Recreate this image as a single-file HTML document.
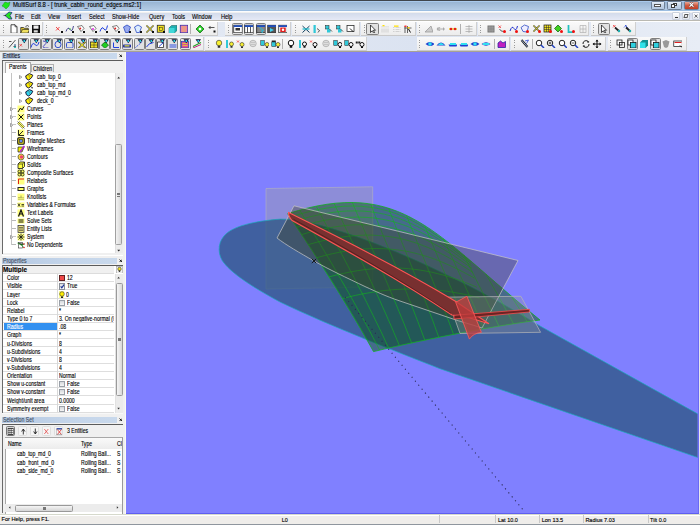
<!DOCTYPE html><html><head><meta charset="utf-8"><style>
*{margin:0;padding:0;box-sizing:border-box}
html,body{width:700px;height:525px;overflow:hidden;background:#f0f0f0;font-family:"Liberation Sans",sans-serif;color:#000}
.a{position:absolute}
.t{position:absolute;white-space:nowrap;font-size:5.6px;line-height:6px;color:#111;-webkit-text-stroke:0.12px currentColor}
</style></head><body>
<div class="a" style="left:0px;top:0px;width:700px;height:1px;background:#40454c"></div>
<div class="a" style="left:0px;top:1px;width:700px;height:9.5px;background:linear-gradient(#a9c9ec 0,#a9c9ec 10%,#9bb6d4 15%,#b7cee7 100%)"></div>
<div class="a" style="left:0px;top:10px;width:700px;height:0.8px;background:#9cbde0"></div>
<svg class="a" style="left:1px;top:1px" width="10" height="9" viewBox="0 0 10 9"><path d="M1 5 L4 1 L7 2 L9 1 L8 5 L5 8 L3 6 Z" fill="#1ee61e" stroke="#0a8a0a" stroke-width="0.4"/></svg>
<div class="t" style="left:13.3px;top:2.2px;transform:scaleX(0.9);transform-origin:0 0;font-size:6.5px;color:#000">MultiSurf 8.8 - [ trunk_cabin_round_edges.ms2:1]</div>
<div class="a" style="left:650.5px;top:1px;width:14.5px;height:8.5px;border:0.6px solid #6d7f95;border-radius:1.5px;background:linear-gradient(#e6eef8,#c3d4e8 50%,#b4c8e0)"></div>
<div class="a" style="left:654.4px;top:3.9px;width:7px;height:3px;background:#fff;border:0.45px solid #555"></div>
<div class="a" style="left:667.3px;top:1px;width:14.5px;height:8.5px;border:0.6px solid #6d7f95;border-radius:1.5px;background:linear-gradient(#e6eef8,#c3d4e8 50%,#b4c8e0)"></div>
<div class="a" style="left:673px;top:2.7px;width:4.2px;height:3.4px;border:0.55px solid #3a3a3a;border-top-width:1px;background:#fff"></div><div class="a" style="left:671.3px;top:4.3px;width:4.2px;height:3.4px;border:0.55px solid #3a3a3a;border-top-width:1px;background:#fff"></div>
<div class="a" style="left:683.5px;top:1px;width:15.5px;height:8.5px;border:0.6px solid #6d7f95;border-radius:1.5px;background:linear-gradient(#eaa898,#d05a40 50%,#c04028)"></div>
<svg class="a" style="left:688px;top:2.2px" width="7" height="5.5" viewBox="0 0 14 11"><path d="M3 1.5 L11 9.5 M11 1.5 L3 9.5" stroke="#4a2020" stroke-width="3.6"/><path d="M3 1.5 L11 9.5 M11 1.5 L3 9.5" stroke="#fff" stroke-width="2.2"/></svg>
<div class="a" style="left:0px;top:10.8px;width:700px;height:1.7px;background:#fbfcfe"></div>
<div class="a" style="left:0px;top:12.5px;width:700px;height:7.5px;background:linear-gradient(#d3dbeb,#e5e9f6)"></div>
<div class="a" style="left:0px;top:20px;width:700px;height:1px;background:#bab9b2"></div>
<svg class="a" style="left:3px;top:11px" width="10" height="9" viewBox="0 0 10 9"><path d="M2 4.5 L6 1 L9 1.5 L7 4.5 L9 8 L6 8 Z" fill="#22e022" stroke="#1a1a8a" stroke-width="0.7"/><path d="M0.5 4.5 L3 4.5" stroke="#111" stroke-width="0.6"/></svg>
<div class="t" style="left:15px;top:13.5px;transform:scaleX(0.82);transform-origin:0 0;font-size:6.8px;color:#000">File</div>
<div class="t" style="left:31.4px;top:13.5px;transform:scaleX(0.82);transform-origin:0 0;font-size:6.8px;color:#000">Edit</div>
<div class="t" style="left:47.7px;top:13.5px;transform:scaleX(0.82);transform-origin:0 0;font-size:6.8px;color:#000">View</div>
<div class="t" style="left:67.4px;top:13.5px;transform:scaleX(0.82);transform-origin:0 0;font-size:6.8px;color:#000">Insert</div>
<div class="t" style="left:88.8px;top:13.5px;transform:scaleX(0.82);transform-origin:0 0;font-size:6.8px;color:#000">Select</div>
<div class="t" style="left:111.5px;top:13.5px;transform:scaleX(0.82);transform-origin:0 0;font-size:6.8px;color:#000">Show-Hide</div>
<div class="t" style="left:148.5px;top:13.5px;transform:scaleX(0.82);transform-origin:0 0;font-size:6.8px;color:#000">Query</div>
<div class="t" style="left:171.5px;top:13.5px;transform:scaleX(0.82);transform-origin:0 0;font-size:6.8px;color:#000">Tools</div>
<div class="t" style="left:192px;top:13.5px;transform:scaleX(0.82);transform-origin:0 0;font-size:6.8px;color:#000">Window</div>
<div class="t" style="left:221px;top:13.5px;transform:scaleX(0.82);transform-origin:0 0;font-size:6.8px;color:#000">Help</div>
<div class="a" style="left:672px;top:12px;width:8px;height:8px;background:linear-gradient(#fff,#e4e8f0);border:0.5px solid #c9d0dc;border-radius:1px"></div>
<div class="a" style="left:682px;top:12px;width:8px;height:8px;background:linear-gradient(#fff,#e4e8f0);border:0.5px solid #c9d0dc;border-radius:1px"></div>
<div class="a" style="left:692px;top:12px;width:8px;height:8px;background:linear-gradient(#fff,#e4e8f0);border:0.5px solid #c9d0dc;border-radius:1px"></div>
<div class="a" style="left:675px;top:17px;width:3px;height:0.9px;background:#333"></div>
<div class="a" style="left:684px;top:13.5px;width:4px;height:4px;border:0.6px solid #555;transform:skewX(-15deg)"></div>
<svg class="a" style="left:693.8px;top:14.2px" width="4.2" height="4.2" viewBox="0 0 10 10"><path d="M1.5 1.5 L8.5 8.5 M8.5 1.5 L1.5 8.5" fill="none" stroke="#333" stroke-width="1.8"/></svg>
<div class="a" style="left:0px;top:21px;width:700px;height:30.5px;background:linear-gradient(90deg,#e9edf5,#dbe3f1 60%,#e8edf6)"></div>
<div class="a" style="left:0px;top:21px;width:700px;height:1px;background:#fff"></div>
<div class="a" style="left:0px;top:22px;width:42.5px;height:14px;background:linear-gradient(#fafafa,#ececec);border-right:0.8px solid #d0d0d0;border-bottom:0.8px solid #c9c9c9"></div>
<div class="a" style="left:2.8px;top:25.0px;width:0.9px;height:0.9px;background:#9a9a9a"></div>
<div class="a" style="left:2.8px;top:27.4px;width:0.9px;height:0.9px;background:#9a9a9a"></div>
<div class="a" style="left:2.8px;top:29.8px;width:0.9px;height:0.9px;background:#9a9a9a"></div>
<div class="a" style="left:2.8px;top:32.2px;width:0.9px;height:0.9px;background:#9a9a9a"></div>
<div class="a" style="left:43.5px;top:22px;width:174.5px;height:14px;background:linear-gradient(#fafafa,#ececec);border-right:0.8px solid #d0d0d0;border-bottom:0.8px solid #c9c9c9"></div>
<div class="a" style="left:46.3px;top:25.0px;width:0.9px;height:0.9px;background:#9a9a9a"></div>
<div class="a" style="left:46.3px;top:27.4px;width:0.9px;height:0.9px;background:#9a9a9a"></div>
<div class="a" style="left:46.3px;top:29.8px;width:0.9px;height:0.9px;background:#9a9a9a"></div>
<div class="a" style="left:46.3px;top:32.2px;width:0.9px;height:0.9px;background:#9a9a9a"></div>
<div class="a" style="left:225px;top:22px;width:66px;height:14px;background:linear-gradient(#fafafa,#ececec);border-right:0.8px solid #d0d0d0;border-bottom:0.8px solid #c9c9c9"></div>
<div class="a" style="left:227.8px;top:25.0px;width:0.9px;height:0.9px;background:#9a9a9a"></div>
<div class="a" style="left:227.8px;top:27.4px;width:0.9px;height:0.9px;background:#9a9a9a"></div>
<div class="a" style="left:227.8px;top:29.8px;width:0.9px;height:0.9px;background:#9a9a9a"></div>
<div class="a" style="left:227.8px;top:32.2px;width:0.9px;height:0.9px;background:#9a9a9a"></div>
<div class="a" style="left:292px;top:22px;width:68px;height:14px;background:linear-gradient(#fafafa,#ececec);border-right:0.8px solid #d0d0d0;border-bottom:0.8px solid #c9c9c9"></div>
<div class="a" style="left:294.8px;top:25.0px;width:0.9px;height:0.9px;background:#9a9a9a"></div>
<div class="a" style="left:294.8px;top:27.4px;width:0.9px;height:0.9px;background:#9a9a9a"></div>
<div class="a" style="left:294.8px;top:29.8px;width:0.9px;height:0.9px;background:#9a9a9a"></div>
<div class="a" style="left:294.8px;top:32.2px;width:0.9px;height:0.9px;background:#9a9a9a"></div>
<div class="a" style="left:361px;top:22px;width:54.60000000000002px;height:14px;background:linear-gradient(#fafafa,#ececec);border-right:0.8px solid #d0d0d0;border-bottom:0.8px solid #c9c9c9"></div>
<div class="a" style="left:363.8px;top:25.0px;width:0.9px;height:0.9px;background:#9a9a9a"></div>
<div class="a" style="left:363.8px;top:27.4px;width:0.9px;height:0.9px;background:#9a9a9a"></div>
<div class="a" style="left:363.8px;top:29.8px;width:0.9px;height:0.9px;background:#9a9a9a"></div>
<div class="a" style="left:363.8px;top:32.2px;width:0.9px;height:0.9px;background:#9a9a9a"></div>
<div class="a" style="left:416.5px;top:22px;width:60.19999999999999px;height:14px;background:linear-gradient(#fafafa,#ececec);border-right:0.8px solid #d0d0d0;border-bottom:0.8px solid #c9c9c9"></div>
<div class="a" style="left:419.3px;top:25.0px;width:0.9px;height:0.9px;background:#9a9a9a"></div>
<div class="a" style="left:419.3px;top:27.4px;width:0.9px;height:0.9px;background:#9a9a9a"></div>
<div class="a" style="left:419.3px;top:29.8px;width:0.9px;height:0.9px;background:#9a9a9a"></div>
<div class="a" style="left:419.3px;top:32.2px;width:0.9px;height:0.9px;background:#9a9a9a"></div>
<div class="a" style="left:477.5px;top:22px;width:111.79999999999995px;height:14px;background:linear-gradient(#fafafa,#ececec);border-right:0.8px solid #d0d0d0;border-bottom:0.8px solid #c9c9c9"></div>
<div class="a" style="left:480.3px;top:25.0px;width:0.9px;height:0.9px;background:#9a9a9a"></div>
<div class="a" style="left:480.3px;top:27.4px;width:0.9px;height:0.9px;background:#9a9a9a"></div>
<div class="a" style="left:480.3px;top:29.8px;width:0.9px;height:0.9px;background:#9a9a9a"></div>
<div class="a" style="left:480.3px;top:32.2px;width:0.9px;height:0.9px;background:#9a9a9a"></div>
<div class="a" style="left:590.5px;top:22px;width:45.200000000000045px;height:14px;background:linear-gradient(#fafafa,#ececec);border-right:0.8px solid #d0d0d0;border-bottom:0.8px solid #c9c9c9"></div>
<div class="a" style="left:593.3px;top:25.0px;width:0.9px;height:0.9px;background:#9a9a9a"></div>
<div class="a" style="left:593.3px;top:27.4px;width:0.9px;height:0.9px;background:#9a9a9a"></div>
<div class="a" style="left:593.3px;top:29.8px;width:0.9px;height:0.9px;background:#9a9a9a"></div>
<div class="a" style="left:593.3px;top:32.2px;width:0.9px;height:0.9px;background:#9a9a9a"></div>
<div class="a" style="left:0px;top:37px;width:204px;height:13.5px;background:linear-gradient(#fafafa,#ececec);border-right:0.8px solid #d0d0d0;border-bottom:0.8px solid #c9c9c9"></div>
<div class="a" style="left:2.8px;top:40.0px;width:0.9px;height:0.9px;background:#9a9a9a"></div>
<div class="a" style="left:2.8px;top:42.4px;width:0.9px;height:0.9px;background:#9a9a9a"></div>
<div class="a" style="left:2.8px;top:44.8px;width:0.9px;height:0.9px;background:#9a9a9a"></div>
<div class="a" style="left:2.8px;top:47.2px;width:0.9px;height:0.9px;background:#9a9a9a"></div>
<div class="a" style="left:205px;top:37px;width:161.7px;height:13.5px;background:linear-gradient(#fafafa,#ececec);border-right:0.8px solid #d0d0d0;border-bottom:0.8px solid #c9c9c9"></div>
<div class="a" style="left:207.8px;top:40.0px;width:0.9px;height:0.9px;background:#9a9a9a"></div>
<div class="a" style="left:207.8px;top:42.4px;width:0.9px;height:0.9px;background:#9a9a9a"></div>
<div class="a" style="left:207.8px;top:44.8px;width:0.9px;height:0.9px;background:#9a9a9a"></div>
<div class="a" style="left:207.8px;top:47.2px;width:0.9px;height:0.9px;background:#9a9a9a"></div>
<div class="a" style="left:416.5px;top:37px;width:93.5px;height:13.5px;background:linear-gradient(#fafafa,#ececec);border-right:0.8px solid #d0d0d0;border-bottom:0.8px solid #c9c9c9"></div>
<div class="a" style="left:419.3px;top:40.0px;width:0.9px;height:0.9px;background:#9a9a9a"></div>
<div class="a" style="left:419.3px;top:42.4px;width:0.9px;height:0.9px;background:#9a9a9a"></div>
<div class="a" style="left:419.3px;top:44.8px;width:0.9px;height:0.9px;background:#9a9a9a"></div>
<div class="a" style="left:419.3px;top:47.2px;width:0.9px;height:0.9px;background:#9a9a9a"></div>
<div class="a" style="left:511px;top:37px;width:95.39999999999998px;height:13.5px;background:linear-gradient(#fafafa,#ececec);border-right:0.8px solid #d0d0d0;border-bottom:0.8px solid #c9c9c9"></div>
<div class="a" style="left:513.8px;top:40.0px;width:0.9px;height:0.9px;background:#9a9a9a"></div>
<div class="a" style="left:513.8px;top:42.4px;width:0.9px;height:0.9px;background:#9a9a9a"></div>
<div class="a" style="left:513.8px;top:44.8px;width:0.9px;height:0.9px;background:#9a9a9a"></div>
<div class="a" style="left:513.8px;top:47.2px;width:0.9px;height:0.9px;background:#9a9a9a"></div>
<div class="a" style="left:607.5px;top:37px;width:79.5px;height:13.5px;background:linear-gradient(#fafafa,#ececec);border-right:0.8px solid #d0d0d0;border-bottom:0.8px solid #c9c9c9"></div>
<div class="a" style="left:610.3px;top:40.0px;width:0.9px;height:0.9px;background:#9a9a9a"></div>
<div class="a" style="left:610.3px;top:42.4px;width:0.9px;height:0.9px;background:#9a9a9a"></div>
<div class="a" style="left:610.3px;top:44.8px;width:0.9px;height:0.9px;background:#9a9a9a"></div>
<div class="a" style="left:610.3px;top:47.2px;width:0.9px;height:0.9px;background:#9a9a9a"></div>
<div class="a" style="left:0px;top:50.5px;width:700px;height:1px;background:#a8a394"></div>
<div class="a" style="left:190.4px;top:24px;width:0.8px;height:10px;background:#b0b0b0"></div>
<div class="a" style="left:459.6px;top:24px;width:0.8px;height:10px;background:#b0b0b0"></div>
<div class="a" style="left:282.4px;top:39px;width:0.8px;height:9.5px;background:#b0b0b0"></div>
<div class="a" style="left:493.9px;top:39px;width:0.8px;height:9.5px;background:#b0b0b0"></div>
<div class="a" style="left:531.6px;top:39px;width:0.8px;height:9.5px;background:#b0b0b0"></div>
<svg class="a" style="left:9.3px;top:24.2px" width="9" height="9" viewBox="0 0 36 36"><path d="M8 3 H24 L32 11 V37 H8 Z" fill="#fff" stroke="#111" stroke-width="3"/><path d="M24 3 V11 H32" fill="none" stroke="#111" stroke-width="2.5"/></svg>
<svg class="a" style="left:19.8px;top:24.2px" width="9" height="9" viewBox="0 0 36 36"><path d="M3 14 H14 L17 17 H33 V36 H3 Z" fill="#d8c030" stroke="#222" stroke-width="3"/><path d="M3 36 L10 22 H38 L32 36Z" fill="#f0e060" stroke="#222" stroke-width="2.5"/><path d="M22 10 Q30 2 36 10" stroke="#222" stroke-width="3" fill="none"/></svg>
<svg class="a" style="left:30.8px;top:24.2px" width="9" height="9" viewBox="0 0 36 36"><rect x="4" y="4" width="32" height="32" fill="#111"/><rect x="10" y="6" width="20" height="13" fill="#eee"/><rect x="11" y="25" width="16" height="9" fill="#ddd"/></svg>
<svg class="a" style="left:53.8px;top:24.2px" width="9" height="9" viewBox="0 0 36 36"><path d="M8 12 L22 26 M22 12 L8 26" stroke="#f03030" stroke-width="3.5"/><rect x="28" y="28" width="8" height="8" fill="#111"/></svg>
<svg class="a" style="left:65.3px;top:24.2px" width="9" height="9" viewBox="0 0 36 36"><path d="M4 30 Q12 8 20 22 T34 8" stroke="#303080" stroke-width="3.5" fill="none"/><circle cx="20" cy="20" r="3" fill="#20c020"/><rect x="28" y="28" width="8" height="8" fill="#111"/></svg>
<svg class="a" style="left:76.3px;top:24.2px" width="9" height="9" viewBox="0 0 36 36"><path d="M6 10 L24 6 L32 18 L20 30 Z" fill="#fff" stroke="#555" stroke-width="3"/><circle cx="17" cy="18" r="4" fill="#e02020"/><rect x="28" y="28" width="8" height="8" fill="#111"/></svg>
<svg class="a" style="left:87.5px;top:24.2px" width="9" height="9" viewBox="0 0 36 36"><path d="M6 10 L24 6 L32 18 L20 30 Z" fill="#fff" stroke="#555" stroke-width="3"/><circle cx="20" cy="20" r="4" fill="#e020e0"/><rect x="28" y="28" width="8" height="8" fill="#111"/></svg>
<svg class="a" style="left:99.1px;top:24.2px" width="9" height="9" viewBox="0 0 36 36"><path d="M4 30 Q12 6 20 20 T34 6" stroke="#2040e0" stroke-width="4" fill="none"/><rect x="28" y="28" width="8" height="8" fill="#111"/></svg>
<svg class="a" style="left:110.5px;top:24.2px" width="9" height="9" viewBox="0 0 36 36"><path d="M6 10 L24 6 L32 18 L20 30 Z" fill="#fff" stroke="#555" stroke-width="3"/><circle cx="17" cy="18" r="4" fill="#e02020"/><rect x="28" y="28" width="8" height="8" fill="#111"/></svg>
<svg class="a" style="left:121.8px;top:24.2px" width="9" height="9" viewBox="0 0 36 36"><path d="M6 12 L20 4 L34 12 L26 34 L14 34Z" fill="#9ae" stroke="#2040c0" stroke-width="3"/><rect x="28" y="28" width="8" height="8" fill="#111"/></svg>
<svg class="a" style="left:133.10000000000002px;top:24.2px" width="9" height="9" viewBox="0 0 36 36"><path d="M6 12 L20 4 L34 12 L26 34 L14 34Z" fill="#def" stroke="#2040c0" stroke-width="3"/><rect x="28" y="28" width="8" height="8" fill="#111"/></svg>
<svg class="a" style="left:144.9px;top:24.2px" width="9" height="9" viewBox="0 0 36 36"><path d="M6 6 L34 34 M34 6 L6 34" stroke="#222" stroke-width="5"/><path d="M6 6 L34 34 M34 6 L6 34" stroke="#e8e020" stroke-width="3"/><rect x="28" y="28" width="8" height="8" fill="#111"/></svg>
<svg class="a" style="left:156.3px;top:24.2px" width="9" height="9" viewBox="0 0 36 36"><rect x="5" y="5" width="28" height="28" fill="#f0e020" stroke="#222" stroke-width="3"/><rect x="13" y="13" width="12" height="12" fill="none" stroke="#222" stroke-width="2"/><rect x="28" y="28" width="8" height="8" fill="#111"/></svg>
<svg class="a" style="left:168.10000000000002px;top:24.2px" width="9" height="9" viewBox="0 0 36 36"><path d="M4 16 L14 6 H36 V26 L26 36 H4Z" fill="#20b0b0" stroke="#105050" stroke-width="2"/><rect x="4" y="16" width="22" height="20" fill="#40d8d8"/></svg>
<svg class="a" style="left:179.3px;top:24.2px" width="9" height="9" viewBox="0 0 36 36"><rect x="5" y="5" width="30" height="30" fill="#f070c0" stroke="#3030a0" stroke-width="3"/><path d="M10 12 H30 M10 20 H30 M10 28 H30" stroke="#e0e020" stroke-width="3"/></svg>
<svg class="a" style="left:194.8px;top:24.2px" width="9" height="9" viewBox="0 0 36 36"><path d="M20 4 L36 20 L20 36 L4 20Z" fill="#20d020" stroke="#106010" stroke-width="3"/><rect x="15" y="15" width="10" height="10" fill="#fff"/></svg>
<svg class="a" style="left:206.5px;top:24.2px" width="9" height="9" viewBox="0 0 36 36"><path d="M8 14 L14 8 M8 14 L14 20 M8 14 H30" stroke="#222" stroke-width="3" fill="none"/><rect x="26" y="26" width="8" height="8" fill="#111"/></svg>
<div class="a" style="left:232.39999999999998px;top:23.2px;width:10.800000000000011px;height:12.000000000000004px;border:0.9px solid #808080;border-radius:1.6px;background:#e2e2e2"></div>
<svg class="a" style="left:233.0px;top:24.2px" width="9" height="9" viewBox="0 0 36 36"><rect x="3" y="5" width="34" height="30" fill="#fff" stroke="#222" stroke-width="3"/><rect x="3" y="5" width="34" height="7" fill="#2050c0"/><rect x="10" y="16" width="18" height="10" fill="#333"/></svg>
<div class="a" style="left:243.6px;top:23.2px;width:10.800000000000011px;height:12.000000000000004px;border:0.9px solid #808080;border-radius:1.6px;background:#e2e2e2"></div>
<svg class="a" style="left:244.20000000000002px;top:24.2px" width="9" height="9" viewBox="0 0 36 36"><rect x="3" y="5" width="34" height="30" fill="#fff" stroke="#222" stroke-width="3"/><rect x="3" y="5" width="34" height="7" fill="#2050c0"/><path d="M14 12 V35 M26 12 V35" stroke="#222" stroke-width="3"/></svg>
<div class="a" style="left:255.6px;top:23.2px;width:10.799999999999983px;height:12.000000000000004px;border:0.9px solid #808080;border-radius:1.6px;background:#e2e2e2"></div>
<svg class="a" style="left:256.2px;top:24.2px" width="9" height="9" viewBox="0 0 36 36"><rect x="3" y="5" width="34" height="30" fill="#888" stroke="#222" stroke-width="3"/><rect x="3" y="5" width="34" height="7" fill="#2050c0"/><path d="M14 14 L30 26 L22 28 L26 36" stroke="#20c0e0" stroke-width="4" fill="none"/></svg>
<svg class="a" style="left:267.3px;top:24.2px" width="9" height="9" viewBox="0 0 36 36"><rect x="3" y="5" width="34" height="30" fill="#555" stroke="#222" stroke-width="3"/><rect x="3" y="5" width="34" height="7" fill="#2050c0"/><path d="M12 16 L28 24 L12 32Z" fill="#40d0f0"/></svg>
<svg class="a" style="left:278.3px;top:24.2px" width="9" height="9" viewBox="0 0 36 36"><rect x="3" y="5" width="34" height="30" fill="#fff" stroke="#222" stroke-width="3"/><rect x="3" y="5" width="34" height="7" fill="#2050c0"/><rect x="9" y="14" width="22" height="18" fill="#e02020"/><circle cx="20" cy="23" r="5" fill="#fff"/></svg>
<svg class="a" style="left:300.5px;top:24.2px" width="9" height="9" viewBox="0 0 36 36"><path d="M6 8 L34 34 M34 8 L6 34" stroke="#104060" stroke-width="4"/><path d="M6 20 H34" stroke="#20c0d0" stroke-width="5"/></svg>
<svg class="a" style="left:311.8px;top:24.2px" width="9" height="9" viewBox="0 0 36 36"><rect x="6" y="4" width="9" height="32" fill="#30c8d8"/><path d="M20 18 L30 26 L24 34" stroke="#222" stroke-width="3" fill="none"/></svg>
<svg class="a" style="left:323.6px;top:24.2px" width="9" height="9" viewBox="0 0 36 36"><rect x="6" y="6" width="14" height="14" fill="#30c8d8" stroke="#222" stroke-width="2"/><rect x="12" y="20" width="14" height="14" fill="#30c8d8"/><path d="M24 22 L32 30" stroke="#222" stroke-width="3"/></svg>
<svg class="a" style="left:334.8px;top:24.2px" width="9" height="9" viewBox="0 0 36 36"><rect x="6" y="6" width="14" height="14" fill="#30c8d8" stroke="#222" stroke-width="2"/><rect x="12" y="20" width="14" height="14" fill="#30c8d8"/><path d="M24 22 L32 30" stroke="#222" stroke-width="3"/></svg>
<svg class="a" style="left:346.3px;top:24.2px" width="9" height="9" viewBox="0 0 36 36"><rect x="4" y="6" width="28" height="24" fill="#fff" stroke="#222" stroke-width="3"/><path d="M16 18 L30 32" stroke="#222" stroke-width="4"/></svg>
<div class="a" style="left:366.4px;top:23.2px;width:12.300000000000011px;height:12.000000000000004px;border:0.9px solid #808080;border-radius:1.6px;background:#e2e2e2"></div>
<svg class="a" style="left:367.5px;top:24.2px" width="9" height="9" viewBox="0 0 36 36"><path d="M10 4 V34 L17 27 L23 37 L27 35 L21 25 H30Z" fill="#fff" stroke="#111" stroke-width="3"/></svg>
<svg class="a" style="left:380.3px;top:24.2px" width="9" height="9" viewBox="0 0 36 36"><path d="M8 10 V36 M16 10 V36 M24 10 V36 M32 10 V36" stroke="#777" stroke-width="2" stroke-dasharray="2 3"/><rect x="10" y="4" width="8" height="5" fill="#ffe000"/></svg>
<svg class="a" style="left:391.8px;top:24.2px" width="9" height="9" viewBox="0 0 36 36"><path d="M6 14 H34 M6 22 H34 M6 30 H34" stroke="#777" stroke-width="2" stroke-dasharray="2 3"/><rect x="8" y="6" width="18" height="5" fill="#ffe000"/></svg>
<svg class="a" style="left:402.90000000000003px;top:24.2px" width="9" height="9" viewBox="0 0 36 36"><path d="M8 8 V36 M18 8 V36 M6 16 H34" stroke="#333" stroke-width="3"/><rect x="6" y="6" width="8" height="6" fill="#ff3030"/><rect x="18" y="12" width="8" height="6" fill="#ffd000"/><path d="M22 20 L30 34" stroke="#111" stroke-width="4"/></svg>
<svg class="a" style="left:424.1px;top:24.2px" width="9" height="9" viewBox="0 0 36 36"><path d="M4 32 L28 8 L36 32Z" fill="#ccc" stroke="#999" stroke-width="3"/></svg>
<svg class="a" style="left:436.1px;top:24.2px" width="9" height="9" viewBox="0 0 36 36"><path d="M4 20 H36" stroke="#999" stroke-width="3"/><path d="M10 12 L4 20 L10 28 M16 12 L10 20 L16 28" stroke="#999" stroke-width="3" fill="none"/><path d="M30 14 V26" stroke="#999" stroke-width="3"/></svg>
<svg class="a" style="left:447.5px;top:24.2px" width="9" height="9" viewBox="0 0 36 36"><path d="M4 20 H36" stroke="#e8c000" stroke-width="5"/><circle cx="12" cy="20" r="5" fill="#e02020"/><circle cx="28" cy="20" r="5" fill="#e02020"/></svg>
<svg class="a" style="left:463.90000000000003px;top:24.2px" width="9" height="9" viewBox="0 0 36 36"><path d="M6 10 H34 M6 20 H34 M6 30 H34 M20 4 V36" stroke="#aaa" stroke-width="3"/></svg>
<svg class="a" style="left:485.8px;top:24.2px" width="9" height="9" viewBox="0 0 36 36"><rect x="6" y="6" width="28" height="28" fill="#777"/><path d="M13 6 V34 M20 6 V34 M27 6 V34 M6 13 H34 M6 20 H34 M6 27 H34" stroke="#bbb" stroke-width="1.5"/></svg>
<svg class="a" style="left:497.3px;top:24.2px" width="9" height="9" viewBox="0 0 36 36"><path d="M6 6 L16 16 M16 6 L6 16" stroke="#f03030" stroke-width="3"/><path d="M10 20 Q14 30 26 30" stroke="#333" stroke-width="3" fill="none"/><circle cx="30" cy="30" r="6" fill="#f01010"/></svg>
<svg class="a" style="left:508.5px;top:24.2px" width="9" height="9" viewBox="0 0 36 36"><path d="M4 28 Q12 4 20 18 T34 8" stroke="#2030d0" stroke-width="4" fill="none"/><circle cx="30" cy="30" r="6" fill="#f01010"/></svg>
<svg class="a" style="left:520.0px;top:24.2px" width="9" height="9" viewBox="0 0 36 36"><path d="M4 14 L18 4 L34 10 L28 32 L12 30Z" fill="#eef" stroke="#2040c0" stroke-width="3"/><circle cx="30" cy="30" r="6" fill="#f01010"/></svg>
<svg class="a" style="left:531.5999999999999px;top:24.2px" width="9" height="9" viewBox="0 0 36 36"><path d="M6 6 L30 30 M30 6 L6 30" stroke="#222" stroke-width="5"/><path d="M6 6 L30 30 M30 6 L6 30" stroke="#e8e020" stroke-width="3"/><circle cx="30" cy="30" r="6" fill="#f01010"/></svg>
<svg class="a" style="left:542.8px;top:24.2px" width="9" height="9" viewBox="0 0 36 36"><rect x="4" y="4" width="28" height="28" fill="#f0e020" stroke="#222" stroke-width="3"/><path d="M4 14 H32 M4 22 H32 M14 4 V32 M22 4 V32" stroke="#222" stroke-width="2"/><circle cx="30" cy="30" r="6" fill="#f01010"/></svg>
<svg class="a" style="left:553.9px;top:24.2px" width="9" height="9" viewBox="0 0 36 36"><path d="M16 4 L30 18 L16 32 L2 18Z" fill="#40d020" stroke="#106010" stroke-width="3"/><circle cx="30" cy="30" r="6" fill="#f01010"/></svg>
<svg class="a" style="left:565.8px;top:24.2px" width="9" height="9" viewBox="0 0 36 36"><path d="M10 4 V32 H30" stroke="#20c0c0" stroke-width="7" fill="none"/><circle cx="30" cy="30" r="6" fill="#f01010"/></svg>
<svg class="a" style="left:577.8px;top:24.2px" width="9" height="9" viewBox="0 0 36 36"><path d="M8 6 H32 V34 H8 Z M8 20 H32 M20 6 V34" stroke="#aaa" stroke-width="2.5" fill="none"/></svg>
<div class="a" style="left:597.6px;top:23.2px;width:12.299999999999955px;height:12.000000000000004px;border:0.9px solid #808080;border-radius:1.6px;background:#e2e2e2"></div>
<svg class="a" style="left:598.6999999999999px;top:24.2px" width="9" height="9" viewBox="0 0 36 36"><path d="M10 4 V34 L17 27 L23 37 L27 35 L21 25 H30Z" fill="#fff" stroke="#111" stroke-width="3"/></svg>
<svg class="a" style="left:611.5999999999999px;top:24.2px" width="9" height="9" viewBox="0 0 36 36"><path d="M4 4 L14 14 M14 4 L4 14" stroke="#f03030" stroke-width="3"/><path d="M12 14 L30 30" stroke="#222" stroke-width="7"/><circle cx="28" cy="28" r="5" fill="#20b0b0"/></svg>
<svg class="a" style="left:622.8px;top:24.2px" width="9" height="9" viewBox="0 0 36 36"><path d="M4 14 L14 4 M8 4 L22 18" stroke="#2040d0" stroke-width="3"/><path d="M12 14 L30 30" stroke="#222" stroke-width="7"/><circle cx="28" cy="28" r="5" fill="#20b0b0"/></svg>
<svg class="a" style="left:7.9px;top:38.8px" width="9.5" height="9.5" viewBox="0 0 38.0 38.0"><path d="M4 34 L30 4" stroke="#222" stroke-width="3"/><path d="M4 10 H14 M22 30 H32" stroke="#222" stroke-width="3"/><path d="M24 22 L32 22 L28 30Z" fill="#104080"/><circle cx="28" cy="34" r="4" fill="#20c0c0"/></svg>
<div class="a" style="left:17.7px;top:37.8px;width:11.100000000000001px;height:11.800000000000004px;border:0.9px solid #808080;border-radius:1.6px;background:#e2e2e2"></div>
<svg class="a" style="left:18.4px;top:38.8px" width="9.5" height="9.5" viewBox="0 0 38.0 38.0"><path d="M6 20 L16 30 M16 20 L6 30" stroke="#f03030" stroke-width="3"/><path d="M14 1 L36 1 L25 17Z" fill="#0a1030"/><circle cx="25" cy="8" r="4" fill="#30e0f0"/></svg>
<div class="a" style="left:29.7px;top:37.8px;width:11.099999999999998px;height:11.800000000000004px;border:0.9px solid #808080;border-radius:1.6px;background:#e2e2e2"></div>
<svg class="a" style="left:30.4px;top:38.8px" width="9.5" height="9.5" viewBox="0 0 38.0 38.0"><path d="M4 34 Q10 10 20 22 T36 12" stroke="#2040e0" stroke-width="4" fill="none"/><path d="M14 1 L36 1 L25 17Z" fill="#0a1030"/><circle cx="25" cy="8" r="4" fill="#30e0f0"/></svg>
<div class="a" style="left:40.7px;top:37.8px;width:11.099999999999994px;height:11.800000000000004px;border:0.9px solid #808080;border-radius:1.6px;background:#e2e2e2"></div>
<svg class="a" style="left:41.4px;top:38.8px" width="9.5" height="9.5" viewBox="0 0 38.0 38.0"><path d="M8 8 Q30 10 14 24 T30 36" stroke="#5050c0" stroke-width="4" fill="none"/><path d="M14 1 L36 1 L25 17Z" fill="#0a1030"/><circle cx="25" cy="8" r="4" fill="#30e0f0"/></svg>
<div class="a" style="left:52.0px;top:37.8px;width:11.099999999999994px;height:11.800000000000004px;border:0.9px solid #808080;border-radius:1.6px;background:#e2e2e2"></div>
<svg class="a" style="left:52.699999999999996px;top:38.8px" width="9.5" height="9.5" viewBox="0 0 38.0 38.0"><ellipse cx="20" cy="22" rx="12" ry="13" fill="none" stroke="#3050d0" stroke-width="4"/><path d="M14 1 L36 1 L25 17Z" fill="#0a1030"/><circle cx="25" cy="8" r="4" fill="#30e0f0"/></svg>
<div class="a" style="left:64.0px;top:37.8px;width:11.099999999999994px;height:11.800000000000004px;border:0.9px solid #808080;border-radius:1.6px;background:#e2e2e2"></div>
<svg class="a" style="left:64.7px;top:38.8px" width="9.5" height="9.5" viewBox="0 0 38.0 38.0"><rect x="6" y="14" width="26" height="22" rx="5" fill="none" stroke="#3050d0" stroke-width="4"/><path d="M14 1 L36 1 L25 17Z" fill="#0a1030"/><circle cx="25" cy="8" r="4" fill="#30e0f0"/></svg>
<div class="a" style="left:76.0px;top:37.8px;width:11.099999999999994px;height:11.800000000000004px;border:0.9px solid #808080;border-radius:1.6px;background:#e2e2e2"></div>
<svg class="a" style="left:76.7px;top:38.8px" width="9.5" height="9.5" viewBox="0 0 38.0 38.0"><path d="M6 12 L34 36 M34 12 L6 36" stroke="#222" stroke-width="6"/><path d="M6 12 L34 36 M34 12 L6 36" stroke="#e8e020" stroke-width="4"/><path d="M14 1 L36 1 L25 17Z" fill="#0a1030"/><circle cx="25" cy="8" r="4" fill="#30e0f0"/></svg>
<div class="a" style="left:88.0px;top:37.8px;width:11.099999999999994px;height:11.800000000000004px;border:0.9px solid #808080;border-radius:1.6px;background:#e2e2e2"></div>
<svg class="a" style="left:88.7px;top:38.8px" width="9.5" height="9.5" viewBox="0 0 38.0 38.0"><rect x="6" y="12" width="28" height="24" fill="#f0e020" stroke="#222" stroke-width="3"/><path d="M6 24 H34 M20 12 V36" stroke="#222" stroke-width="2"/><path d="M14 1 L36 1 L25 17Z" fill="#0a1030"/><circle cx="25" cy="8" r="4" fill="#30e0f0"/></svg>
<div class="a" style="left:99.10000000000001px;top:37.8px;width:11.099999999999994px;height:11.800000000000004px;border:0.9px solid #808080;border-radius:1.6px;background:#e2e2e2"></div>
<svg class="a" style="left:99.80000000000001px;top:38.8px" width="9.5" height="9.5" viewBox="0 0 38.0 38.0"><path d="M20 12 L34 24 L20 38 L6 24Z" fill="#20d020" stroke="#106010" stroke-width="3"/><path d="M14 1 L36 1 L25 17Z" fill="#0a1030"/><circle cx="25" cy="8" r="4" fill="#30e0f0"/></svg>
<div class="a" style="left:110.3px;top:37.8px;width:11.099999999999994px;height:11.800000000000004px;border:0.9px solid #808080;border-radius:1.6px;background:#e2e2e2"></div>
<svg class="a" style="left:111.0px;top:38.8px" width="9.5" height="9.5" viewBox="0 0 38.0 38.0"><path d="M10 14 V34 H32" stroke="#2040e0" stroke-width="4" fill="none"/><path d="M14 1 L36 1 L25 17Z" fill="#0a1030"/><circle cx="25" cy="8" r="4" fill="#30e0f0"/></svg>
<div class="a" style="left:121.60000000000001px;top:37.8px;width:11.100000000000009px;height:11.800000000000004px;border:0.9px solid #808080;border-radius:1.6px;background:#e2e2e2"></div>
<svg class="a" style="left:122.30000000000001px;top:38.8px" width="9.5" height="9.5" viewBox="0 0 38.0 38.0"><rect x="4" y="22" width="32" height="12" rx="3" fill="#2030a0"/><rect x="10" y="25" width="20" height="5" fill="#e0e040"/><path d="M14 1 L36 1 L25 17Z" fill="#0a1030"/><circle cx="25" cy="8" r="4" fill="#30e0f0"/></svg>
<div class="a" style="left:133.6px;top:37.8px;width:11.100000000000023px;height:11.800000000000004px;border:0.9px solid #808080;border-radius:1.6px;background:#e2e2e2"></div>
<svg class="a" style="left:134.3px;top:38.8px" width="9.5" height="9.5" viewBox="0 0 38.0 38.0"><path d="M6 34 L34 10" stroke="#2040e0" stroke-width="4" stroke-dasharray="5 4"/><path d="M14 1 L36 1 L25 17Z" fill="#0a1030"/><circle cx="25" cy="8" r="4" fill="#30e0f0"/></svg>
<div class="a" style="left:144.7px;top:37.8px;width:11.100000000000023px;height:11.800000000000004px;border:0.9px solid #808080;border-radius:1.6px;background:#e2e2e2"></div>
<svg class="a" style="left:145.4px;top:38.8px" width="9.5" height="9.5" viewBox="0 0 38.0 38.0"><path d="M6 32 Q14 16 34 14" stroke="#2040e0" stroke-width="4" fill="none"/><path d="M14 1 L36 1 L25 17Z" fill="#0a1030"/><circle cx="25" cy="8" r="4" fill="#30e0f0"/></svg>
<div class="a" style="left:155.7px;top:37.8px;width:11.100000000000023px;height:11.800000000000004px;border:0.9px solid #808080;border-radius:1.6px;background:#e2e2e2"></div>
<svg class="a" style="left:156.4px;top:38.8px" width="9.5" height="9.5" viewBox="0 0 38.0 38.0"><path d="M6 12 H30 V34 H6Z" fill="#fff" stroke="#222" stroke-width="3"/><path d="M12 30 L30 14" stroke="#3050e0" stroke-width="4"/><path d="M14 1 L36 1 L25 17Z" fill="#0a1030"/><circle cx="25" cy="8" r="4" fill="#30e0f0"/></svg>
<div class="a" style="left:167.0px;top:37.8px;width:11.100000000000023px;height:11.800000000000004px;border:0.9px solid #808080;border-radius:1.6px;background:#e2e2e2"></div>
<svg class="a" style="left:167.70000000000002px;top:38.8px" width="9.5" height="9.5" viewBox="0 0 38.0 38.0"><path d="M6 24 H34 M6 32 H34" stroke="#3050e0" stroke-width="4"/><path d="M14 1 L36 1 L25 17Z" fill="#0a1030"/><circle cx="25" cy="8" r="4" fill="#30e0f0"/></svg>
<div class="a" style="left:179.7px;top:37.8px;width:11.100000000000023px;height:11.800000000000004px;border:0.9px solid #808080;border-radius:1.6px;background:#e2e2e2"></div>
<svg class="a" style="left:180.4px;top:38.8px" width="9.5" height="9.5" viewBox="0 0 38.0 38.0"><rect x="6" y="10" width="28" height="26" fill="#e05090" stroke="#3040b0" stroke-width="3"/><path d="M10 18 H30 M10 26 H30" stroke="#e0e020" stroke-width="3"/><path d="M14 1 L36 1 L25 17Z" fill="#0a1030"/><circle cx="25" cy="8" r="4" fill="#30e0f0"/></svg>
<svg class="a" style="left:192.4px;top:38.8px" width="9.5" height="9.5" viewBox="0 0 38.0 38.0"><path d="M4 30 L36 14" stroke="#20a020" stroke-width="5"/><path d="M4 36 L36 22" stroke="#c02080" stroke-width="4"/><path d="M14 1 L36 1 L25 17Z" fill="#0a1030"/><circle cx="25" cy="8" r="4" fill="#30e0f0"/></svg>
<svg class="a" style="left:214.20000000000002px;top:38.8px" width="9.5" height="9.5" viewBox="0 0 38.0 38.0"><circle cx="20" cy="16" r="11" fill="#f8f030" stroke="#333" stroke-width="2.5"/><rect x="15" y="27" width="10" height="8" fill="#333"/></svg>
<svg class="a" style="left:225.4px;top:38.8px" width="9.5" height="9.5" viewBox="0 0 38.0 38.0"><rect x="4" y="4" width="8" height="32" fill="#30c8d8"/><circle cx="26" cy="20" r="8" fill="#f8f030" stroke="#333" stroke-width="2.5"/><rect x="22" y="28" width="8" height="7" fill="#333"/></svg>
<svg class="a" style="left:236.4px;top:38.8px" width="9.5" height="9.5" viewBox="0 0 38.0 38.0"><path d="M4 6 L12 14 M12 6 L4 14" stroke="#f03030" stroke-width="3"/><circle cx="24" cy="22" r="8" fill="#f8f030" stroke="#333" stroke-width="2.5"/><rect x="20" y="30" width="8" height="6" fill="#333"/></svg>
<svg class="a" style="left:248.20000000000002px;top:38.8px" width="9.5" height="9.5" viewBox="0 0 38.0 38.0"><circle cx="20" cy="18" r="13" fill="#ddd" stroke="#aaa" stroke-width="3"/><path d="M12 14 H28 M12 22 H28" stroke="#aaa" stroke-width="2"/></svg>
<svg class="a" style="left:259.7px;top:38.8px" width="9.5" height="9.5" viewBox="0 0 38.0 38.0"><rect x="3" y="6" width="14" height="20" fill="#30c8d8" stroke="#222" stroke-width="2"/><circle cx="28" cy="22" r="8" fill="#f8f030" stroke="#333" stroke-width="2.5"/><rect x="24" y="30" width="8" height="6" fill="#333"/></svg>
<svg class="a" style="left:271.0px;top:38.8px" width="9.5" height="9.5" viewBox="0 0 38.0 38.0"><rect x="3" y="12" width="16" height="18" fill="#30c8d8" stroke="#222" stroke-width="2"/><rect x="3" y="6" width="16" height="6" fill="#222"/><circle cx="28" cy="22" r="8" fill="#f8f030" stroke="#333" stroke-width="2.5"/><rect x="24" y="30" width="8" height="6" fill="#333"/></svg>
<svg class="a" style="left:286.4px;top:38.8px" width="9.5" height="9.5" viewBox="0 0 38.0 38.0"><circle cx="20" cy="16" r="11" fill="#fff" stroke="#111" stroke-width="4"/><rect x="15" y="27" width="10" height="8" fill="#111"/></svg>
<svg class="a" style="left:298.0px;top:38.8px" width="9.5" height="9.5" viewBox="0 0 38.0 38.0"><rect x="4" y="4" width="8" height="32" fill="#30c8d8"/><circle cx="26" cy="20" r="8" fill="#fff" stroke="#111" stroke-width="4"/><rect x="22" y="28" width="8" height="7" fill="#111"/></svg>
<svg class="a" style="left:309.4px;top:38.8px" width="9.5" height="9.5" viewBox="0 0 38.0 38.0"><path d="M4 6 L12 14 M12 6 L4 14" stroke="#f03030" stroke-width="3"/><circle cx="24" cy="22" r="8" fill="#fff" stroke="#111" stroke-width="4"/><rect x="20" y="30" width="8" height="6" fill="#111"/></svg>
<svg class="a" style="left:321.0px;top:38.8px" width="9.5" height="9.5" viewBox="0 0 38.0 38.0"><circle cx="20" cy="18" r="13" fill="#ddd" stroke="#aaa" stroke-width="3"/><path d="M12 14 H28 M12 22 H28" stroke="#aaa" stroke-width="2"/></svg>
<svg class="a" style="left:332.7px;top:38.8px" width="9.5" height="9.5" viewBox="0 0 38.0 38.0"><rect x="3" y="6" width="14" height="20" fill="#30c8d8" stroke="#222" stroke-width="2"/><circle cx="28" cy="22" r="8" fill="#fff" stroke="#111" stroke-width="4"/><rect x="24" y="30" width="8" height="6" fill="#111"/></svg>
<svg class="a" style="left:344.0px;top:38.8px" width="9.5" height="9.5" viewBox="0 0 38.0 38.0"><rect x="3" y="6" width="14" height="20" fill="#30c8d8" stroke="#222" stroke-width="2"/><circle cx="28" cy="22" r="8" fill="#fff" stroke="#111" stroke-width="4"/><rect x="24" y="30" width="8" height="6" fill="#111"/></svg>
<svg class="a" style="left:355.09999999999997px;top:38.8px" width="9.5" height="9.5" viewBox="0 0 38.0 38.0"><rect x="3" y="10" width="8" height="8" fill="#222"/><rect x="13" y="10" width="8" height="8" fill="#222"/><circle cx="28" cy="22" r="8" fill="#fff" stroke="#111" stroke-width="4"/><rect x="24" y="30" width="8" height="6" fill="#111"/></svg>
<svg class="a" style="left:424.9px;top:38.8px" width="9.5" height="9.5" viewBox="0 0 38.0 38.0"><path d="M2 20 Q20 4 38 20 Q20 36 2 20Z" fill="#2040d0"/><circle cx="20" cy="20" r="7" fill="#30e0f0"/></svg>
<svg class="a" style="left:436.4px;top:38.8px" width="9.5" height="9.5" viewBox="0 0 38.0 38.0"><path d="M2 26 Q20 2 38 26Z" fill="#2040d0"/><path d="M8 24 Q20 8 32 24Z" fill="#30e0f0"/></svg>
<svg class="a" style="left:447.7px;top:38.8px" width="9.5" height="9.5" viewBox="0 0 38.0 38.0"><path d="M2 22 H38 L34 30 H6Z" fill="#2040d0"/><rect x="8" y="16" width="24" height="8" fill="#30e0f0"/></svg>
<svg class="a" style="left:458.9px;top:38.8px" width="9.5" height="9.5" viewBox="0 0 38.0 38.0"><path d="M2 22 H38 L34 30 H6Z" fill="#2040d0"/><rect x="8" y="16" width="24" height="8" fill="#30e0f0"/></svg>
<svg class="a" style="left:470.2px;top:38.8px" width="9.5" height="9.5" viewBox="0 0 38.0 38.0"><path d="M2 20 Q20 4 38 20 Q20 36 2 20Z" fill="#2040d0"/><circle cx="20" cy="20" r="7" fill="#30e0f0"/></svg>
<svg class="a" style="left:481.4px;top:38.8px" width="9.5" height="9.5" viewBox="0 0 38.0 38.0"><path d="M2 20 Q20 6 38 20 Q20 34 2 20Z" fill="#2040d0"/><rect x="8" y="16" width="24" height="8" fill="#30e0f0"/></svg>
<svg class="a" style="left:497.2px;top:38.8px" width="9.5" height="9.5" viewBox="0 0 38.0 38.0"><path d="M4 34 V16 L14 8 L24 16 L34 10 V34Z" fill="#c020c0" stroke="#2020a0" stroke-width="3"/></svg>
<svg class="a" style="left:519.9px;top:38.8px" width="9.5" height="9.5" viewBox="0 0 38.0 38.0"><path d="M6 4 L30 32" stroke="#111" stroke-width="8"/><path d="M6 4 L30 32" stroke="#9ac" stroke-width="4"/><path d="M20 8 L34 4 L26 18" stroke="#2040d0" stroke-width="3" fill="none"/></svg>
<svg class="a" style="left:535.0px;top:38.8px" width="9.5" height="9.5" viewBox="0 0 38.0 38.0"><circle cx="16" cy="16" r="11" fill="#fff" stroke="#222" stroke-width="4"/><path d="M24 24 L36 36" stroke="#2040c0" stroke-width="6"/></svg>
<svg class="a" style="left:546.1999999999999px;top:38.8px" width="9.5" height="9.5" viewBox="0 0 38.0 38.0"><circle cx="16" cy="16" r="11" fill="#fff" stroke="#222" stroke-width="4"/><path d="M10 16 H22 M16 10 V22" stroke="#222" stroke-width="3"/><path d="M24 24 L36 36" stroke="#2040c0" stroke-width="6"/></svg>
<svg class="a" style="left:557.6px;top:38.8px" width="9.5" height="9.5" viewBox="0 0 38.0 38.0"><circle cx="16" cy="16" r="11" fill="#fff" stroke="#222" stroke-width="4"/><path d="M24 24 L36 36" stroke="#2040c0" stroke-width="6"/></svg>
<svg class="a" style="left:569.4px;top:38.8px" width="9.5" height="9.5" viewBox="0 0 38.0 38.0"><circle cx="16" cy="16" r="11" fill="#fff" stroke="#222" stroke-width="4"/><path d="M10 16 H22" stroke="#222" stroke-width="3"/><path d="M24 24 L36 36" stroke="#2040c0" stroke-width="6"/></svg>
<svg class="a" style="left:580.6999999999999px;top:38.8px" width="9.5" height="9.5" viewBox="0 0 38.0 38.0"><path d="M8 20 A12 12 0 0 1 30 12 M32 20 A12 12 0 0 1 10 28" stroke="#222" stroke-width="4" fill="none"/><path d="M26 6 L34 12 L26 16Z M14 34 L6 28 L14 24Z" fill="#222"/></svg>
<svg class="a" style="left:592.1999999999999px;top:38.8px" width="9.5" height="9.5" viewBox="0 0 38.0 38.0"><path d="M20 4 V36 M4 20 H36" stroke="#111" stroke-width="4"/><path d="M20 2 L14 10 H26Z M20 38 L14 30 H26Z M2 20 L10 14 V26Z M38 20 L30 14 V26Z" fill="#111"/></svg>
<svg class="a" style="left:616.1999999999999px;top:38.8px" width="9.5" height="9.5" viewBox="0 0 38.0 38.0"><rect x="4" y="4" width="20" height="20" fill="none" stroke="#111" stroke-width="3"/><rect x="14" y="14" width="20" height="20" fill="none" stroke="#111" stroke-width="3"/></svg>
<div class="a" style="left:626.7px;top:37.8px;width:11.099999999999909px;height:11.800000000000004px;border:0.9px solid #808080;border-radius:1.6px;background:#e2e2e2"></div>
<svg class="a" style="left:627.4px;top:38.8px" width="9.5" height="9.5" viewBox="0 0 38.0 38.0"><rect x="4" y="4" width="20" height="20" fill="#fff" stroke="#111" stroke-width="3"/><rect x="14" y="14" width="22" height="22" fill="#30d0e0" stroke="#111" stroke-width="3"/></svg>
<svg class="a" style="left:638.9px;top:38.8px" width="9.5" height="9.5" viewBox="0 0 38.0 38.0"><path d="M4 14 L14 4 H36 V26 L26 36 H4Z" fill="#109090"/><rect x="4" y="14" width="22" height="22" fill="#30e0e8"/></svg>
<div class="a" style="left:649.5px;top:37.8px;width:11.099999999999909px;height:11.800000000000004px;border:0.9px solid #808080;border-radius:1.6px;background:#e2e2e2"></div>
<svg class="a" style="left:650.1999999999999px;top:38.8px" width="9.5" height="9.5" viewBox="0 0 38.0 38.0"><rect x="4" y="4" width="20" height="20" fill="#fff" stroke="#111" stroke-width="3"/><rect x="14" y="14" width="22" height="22" fill="#30d0e0" stroke="#111" stroke-width="3"/></svg>
<svg class="a" style="left:661.1999999999999px;top:38.8px" width="9.5" height="9.5" viewBox="0 0 38.0 38.0"><path d="M6 10 L20 4 L34 10 L28 32 L20 36 L12 32Z" fill="#999"/></svg>
<svg class="a" style="left:672.9px;top:38.8px" width="9.5" height="9.5" viewBox="0 0 38.0 38.0"><rect x="3" y="8" width="34" height="22" fill="#fff" stroke="#222" stroke-width="3"/><path d="M6 14 H34" stroke="#e02020" stroke-width="4"/><path d="M28 26 L36 34" stroke="#222" stroke-width="4"/></svg>
<div class="a" style="left:0px;top:51.5px;width:126px;height:462.5px;background:#f0f0f0"></div>
<div class="a" style="left:124.8px;top:51.5px;width:1.4px;height:462.5px;background:#fbfaf0"></div>
<div class="a" style="left:2px;top:52.6px;width:114.5px;height:6.3px;background:linear-gradient(90deg,#b4c8e2,#c4d5ea 60%,#c9d9ec)"></div>
<div class="t" style="left:2.7px;top:52.9px;transform:scaleX(0.8);transform-origin:0 0;font-size:6.5px;color:#101018">Entities</div>
<svg class="a" style="left:118.9px;top:54.1px" width="3.6" height="3.6" viewBox="0 0 10 10"><path d="M1.5 1.5 L8.5 8.5 M8.5 1.5 L1.5 8.5" fill="none" stroke="#111" stroke-width="2.6"/></svg>
<div class="a" style="left:2.2px;top:60px;width:120.6px;height:1.0px;background:#5b5b5b"></div>
<div class="a" style="left:2.2px;top:60.8px;width:1px;height:192.8px;background:#6a6a6a"></div>
<div class="a" style="left:31px;top:63.6px;width:23px;height:8.9px;background:linear-gradient(#f4f4f4,#e9e9e9);border:0.6px solid #b0b0b0;border-bottom:none"></div>
<div class="a" style="left:5px;top:62.2px;width:26px;height:10.5px;background:#fcfcfc;border:0.6px solid #acacac;border-bottom:none"></div>
<div class="t" style="left:8.6px;top:63.9px;transform:scaleX(0.815);transform-origin:0 0;font-size:6.3px;color:#000">Parents</div>
<div class="t" style="left:33px;top:65.8px;transform:scaleX(0.815);transform-origin:0 0;font-size:6.3px;color:#000">Children</div>
<div class="a" style="left:3.2px;top:72.6px;width:111.6px;height:180.8px;background:#fff"></div>
<div class="a" style="left:114.8px;top:72.6px;width:8.6px;height:180.8px;background:#ececec;border-left:0.6px solid #e0e0e0"></div>
<svg class="a" style="left:117px;top:76px" width="3.4" height="3.4" viewBox="0 0 10 10"><path d="M1 7.5 L5 2.5 L9 7.5Z" fill="#222"/></svg>
<svg class="a" style="left:117px;top:248.6px" width="3.4" height="3.4" viewBox="0 0 10 10"><path d="M1 2.5 L5 7.5 L9 2.5Z" fill="#222"/></svg>
<div class="a" style="left:114.8px;top:143.6px;width:7.6px;height:101.4px;background:linear-gradient(90deg,#f2f2f2,#d8d8d8);border:0.6px solid #a0a0a0;border-radius:1.5px"></div>
<div class="a" style="left:117.2px;top:193px;width:3px;height:0.6px;background:#777"></div>
<div class="a" style="left:117.2px;top:194.4px;width:3px;height:0.6px;background:#777"></div>
<div class="a" style="left:117.2px;top:195.8px;width:3px;height:0.6px;background:#777"></div>
<div class="a" style="left:10.9px;top:72.6px;width:0.8px;height:172px;background:#c4c4c4"></div>
<svg class="a" style="left:19.2px;top:74.5px" width="3.4" height="4.2" viewBox="0 0 8 10"><path d="M1.2 1.2 L6.8 5 L1.2 8.8Z" fill="#fff" stroke="#6a6a6a" stroke-width="1.5"/></svg>
<svg class="a" style="left:25px;top:72.6px" width="8.5" height="8" viewBox="0 0 17 16"><path d="M1.4 5.8 L8.8 1.2 L15.6 4.4 L12.8 9.8 L7.4 14 L2.6 11.2Z" fill="#ffee00" stroke="#101030" stroke-width="1.9" stroke-linejoin="round"/><path d="M6 6 L10 5 L9 10" fill="none" stroke="#666" stroke-width="1"/></svg>
<div class="t" style="left:36.5px;top:74.3px;transform:scaleX(0.815);transform-origin:0 0;font-size:6.3px;color:#000">cab_top_0</div>
<svg class="a" style="left:19.2px;top:82.5px" width="3.4" height="4.2" viewBox="0 0 8 10"><path d="M1.2 1.2 L6.8 5 L1.2 8.8Z" fill="#fff" stroke="#6a6a6a" stroke-width="1.5"/></svg>
<svg class="a" style="left:25px;top:80.6px" width="8.5" height="8" viewBox="0 0 17 16"><path d="M1.4 5.8 L8.8 1.2 L15.6 4.4 L12.8 9.8 L7.4 14 L2.6 11.2Z" fill="#ffee00" stroke="#101030" stroke-width="1.9" stroke-linejoin="round"/><path d="M6 6 L10 5 L9 10" fill="none" stroke="#666" stroke-width="1"/><path d="M12 11 L16 13 L14 16Z" fill="#222"/></svg>
<div class="t" style="left:36.5px;top:82.3px;transform:scaleX(0.815);transform-origin:0 0;font-size:6.3px;color:#000">cab_top_md</div>
<svg class="a" style="left:19.2px;top:90.5px" width="3.4" height="4.2" viewBox="0 0 8 10"><path d="M1.2 1.2 L6.8 5 L1.2 8.8Z" fill="#fff" stroke="#6a6a6a" stroke-width="1.5"/></svg>
<svg class="a" style="left:25px;top:88.6px" width="8.5" height="8" viewBox="0 0 17 16"><path d="M1.4 5.8 L8.8 1.2 L15.6 4.4 L12.8 9.8 L7.4 14 L2.6 11.2Z" fill="#30d8f0" stroke="#101030" stroke-width="1.9" stroke-linejoin="round"/><path d="M6 6 L10 5 L9 10" fill="none" stroke="#666" stroke-width="1"/></svg>
<div class="t" style="left:36.5px;top:90.3px;transform:scaleX(0.815);transform-origin:0 0;font-size:6.3px;color:#000">cab_top_md_0</div>
<svg class="a" style="left:19.2px;top:98.5px" width="3.4" height="4.2" viewBox="0 0 8 10"><path d="M1.2 1.2 L6.8 5 L1.2 8.8Z" fill="#fff" stroke="#6a6a6a" stroke-width="1.5"/></svg>
<svg class="a" style="left:25px;top:96.6px" width="8.5" height="8" viewBox="0 0 17 16"><path d="M1.4 5.8 L8.8 1.2 L15.6 4.4 L12.8 9.8 L7.4 14 L2.6 11.2Z" fill="#ffee00" stroke="#101030" stroke-width="1.9" stroke-linejoin="round"/><path d="M6 6 L10 5 L9 10" fill="none" stroke="#666" stroke-width="1"/></svg>
<div class="t" style="left:36.5px;top:98.3px;transform:scaleX(0.815);transform-origin:0 0;font-size:6.3px;color:#000">deck_0</div>
<svg class="a" style="left:9.6px;top:106.6px" width="3.4" height="4.2" viewBox="0 0 8 10"><path d="M1.2 1.2 L6.8 5 L1.2 8.8Z" fill="#fff" stroke="#6a6a6a" stroke-width="1.5"/></svg>
<div class="a" style="left:13.2px;top:108.39999999999999px;width:3px;height:0.8px;background:#c8c8c8"></div>
<svg class="a" style="left:16.5px;top:104.6px" width="8" height="8" viewBox="0 0 16 16"><rect x="1" y="1" width="14" height="14" fill="#ffff80"/><path d="M2 14 L7 6 L10 10 L14 3" stroke="#111" stroke-width="2" fill="none"/></svg>
<div class="t" style="left:27px;top:106.3px;transform:scaleX(0.815);transform-origin:0 0;font-size:6.3px;color:#000">Curves</div>
<svg class="a" style="left:9.6px;top:114.6px" width="3.4" height="4.2" viewBox="0 0 8 10"><path d="M1.2 1.2 L6.8 5 L1.2 8.8Z" fill="#fff" stroke="#6a6a6a" stroke-width="1.5"/></svg>
<div class="a" style="left:13.2px;top:116.39999999999999px;width:3px;height:0.8px;background:#c8c8c8"></div>
<svg class="a" style="left:16.5px;top:112.6px" width="8" height="8" viewBox="0 0 16 16"><rect x="1" y="1" width="14" height="14" fill="#ffff80"/><path d="M3 3 L13 13 M13 3 L3 13" stroke="#111" stroke-width="2"/></svg>
<div class="t" style="left:27px;top:114.3px;transform:scaleX(0.815);transform-origin:0 0;font-size:6.3px;color:#000">Points</div>
<svg class="a" style="left:9.6px;top:122.6px" width="3.4" height="4.2" viewBox="0 0 8 10"><path d="M1.2 1.2 L6.8 5 L1.2 8.8Z" fill="#fff" stroke="#6a6a6a" stroke-width="1.5"/></svg>
<div class="a" style="left:13.2px;top:124.39999999999999px;width:3px;height:0.8px;background:#c8c8c8"></div>
<svg class="a" style="left:16.5px;top:120.6px" width="8" height="8" viewBox="0 0 16 16"><path d="M1 5 L5 1 L15 11 L11 15Z" fill="#ffff60" stroke="#666" stroke-width="1.2"/><path d="M1 1 L15 15" stroke="#333" stroke-width="1.3"/></svg>
<div class="t" style="left:27px;top:122.3px;transform:scaleX(0.815);transform-origin:0 0;font-size:6.3px;color:#000">Planes</div>
<div class="a" style="left:11.5px;top:132.4px;width:4.8px;height:0.8px;background:#b8b8b8"></div>
<svg class="a" style="left:16.5px;top:128.6px" width="8" height="8" viewBox="0 0 16 16"><rect x="1" y="1" width="14" height="14" fill="#ffff80"/><path d="M3 2 V13 H14 M4 12 L12 4" stroke="#111" stroke-width="1.8" fill="none"/></svg>
<div class="t" style="left:27px;top:130.29999999999998px;transform:scaleX(0.815);transform-origin:0 0;font-size:6.3px;color:#000">Frames</div>
<div class="a" style="left:11.5px;top:140.4px;width:4.8px;height:0.8px;background:#b8b8b8"></div>
<svg class="a" style="left:16.5px;top:136.6px" width="8" height="8" viewBox="0 0 16 16"><rect x="1.5" y="1.5" width="13" height="13" rx="2" fill="#f0e020" stroke="#111" stroke-width="2.2"/><rect x="5" y="5" width="6" height="6" fill="#6a8af0" stroke="#111" stroke-width="1"/></svg>
<div class="t" style="left:27px;top:138.29999999999998px;transform:scaleX(0.815);transform-origin:0 0;font-size:6.3px;color:#000">Triangle Meshes</div>
<div class="a" style="left:11.5px;top:148.4px;width:4.8px;height:0.8px;background:#b8b8b8"></div>
<svg class="a" style="left:16.5px;top:144.6px" width="8" height="8" viewBox="0 0 16 16"><path d="M2 4 H14 L10 14 H2Z" fill="#f0f000" stroke="#111" stroke-width="1.3"/><path d="M6 14 L15 2" stroke="#b020d0" stroke-width="3"/></svg>
<div class="t" style="left:27px;top:146.29999999999998px;transform:scaleX(0.815);transform-origin:0 0;font-size:6.3px;color:#000">Wireframes</div>
<div class="a" style="left:11.5px;top:156.4px;width:4.8px;height:0.8px;background:#b8b8b8"></div>
<svg class="a" style="left:16.5px;top:152.6px" width="8" height="8" viewBox="0 0 16 16"><path d="M2 6 Q4 1 9 2 Q15 3 14 9 Q13 15 7 14 Q1 13 2 6Z" fill="#f8e040" stroke="#222" stroke-width="1.2"/><circle cx="9" cy="8" r="3.6" fill="#f04070"/></svg>
<div class="t" style="left:27px;top:154.29999999999998px;transform:scaleX(0.815);transform-origin:0 0;font-size:6.3px;color:#000">Contours</div>
<div class="a" style="left:11.5px;top:164.4px;width:4.8px;height:0.8px;background:#b8b8b8"></div>
<svg class="a" style="left:16.5px;top:160.6px" width="8" height="8" viewBox="0 0 16 16"><path d="M2 6 L6 2 H15 V11 L11 15 H2Z" fill="#ffff40" stroke="#111" stroke-width="1.6"/><path d="M2 6 H11 V15 M11 6 L15 2" stroke="#111" stroke-width="1.2" fill="none"/></svg>
<div class="t" style="left:27px;top:162.29999999999998px;transform:scaleX(0.815);transform-origin:0 0;font-size:6.3px;color:#000">Solids</div>
<div class="a" style="left:11.5px;top:172.4px;width:4.8px;height:0.8px;background:#b8b8b8"></div>
<svg class="a" style="left:16.5px;top:168.6px" width="8" height="8" viewBox="0 0 16 16"><rect x="1" y="1" width="14" height="14" fill="#ffff60"/><circle cx="5" cy="5" r="3" fill="none" stroke="#111" stroke-width="1.5"/><circle cx="11" cy="11" r="3" fill="none" stroke="#111" stroke-width="1.5"/><circle cx="11" cy="5" r="3" fill="none" stroke="#111" stroke-width="1.5"/><circle cx="5" cy="11" r="3" fill="none" stroke="#111" stroke-width="1.5"/></svg>
<div class="t" style="left:27px;top:170.29999999999998px;transform:scaleX(0.815);transform-origin:0 0;font-size:6.3px;color:#000">Composite Surfaces</div>
<div class="a" style="left:11.5px;top:180.4px;width:4.8px;height:0.8px;background:#b8b8b8"></div>
<svg class="a" style="left:16.5px;top:176.6px" width="8" height="8" viewBox="0 0 16 16"><rect x="1" y="1" width="14" height="14" fill="#ffff80"/><path d="M3 14 V4 H14" stroke="#e02020" stroke-width="2" fill="none"/></svg>
<div class="t" style="left:27px;top:178.29999999999998px;transform:scaleX(0.815);transform-origin:0 0;font-size:6.3px;color:#000">Relabels</div>
<div class="a" style="left:11.5px;top:188.4px;width:4.8px;height:0.8px;background:#b8b8b8"></div>
<svg class="a" style="left:16.5px;top:184.6px" width="8" height="8" viewBox="0 0 16 16"><rect x="1" y="4" width="14" height="8" fill="#222"/><rect x="3" y="6" width="10" height="4" fill="#ffff60"/></svg>
<div class="t" style="left:27px;top:186.29999999999998px;transform:scaleX(0.815);transform-origin:0 0;font-size:6.3px;color:#000">Graphs</div>
<div class="a" style="left:11.5px;top:196.4px;width:4.8px;height:0.8px;background:#b8b8b8"></div>
<svg class="a" style="left:16.5px;top:192.6px" width="8" height="8" viewBox="0 0 16 16"><rect x="1" y="1" width="14" height="14" fill="#ffff80"/><path d="M4 13 V7 M8 13 V4 M12 13 V9" stroke="#111" stroke-width="1.5" stroke-dasharray="1.5 1.5"/></svg>
<div class="t" style="left:27px;top:194.29999999999998px;transform:scaleX(0.815);transform-origin:0 0;font-size:6.3px;color:#000">Knotlists</div>
<div class="a" style="left:11.5px;top:204.4px;width:4.8px;height:0.8px;background:#b8b8b8"></div>
<svg class="a" style="left:16.5px;top:200.6px" width="8" height="8" viewBox="0 0 16 16"><rect x="1" y="3" width="14" height="10" fill="#ffff80"/><path d="M2 5 L6 11 M6 5 L2 11 M9 7 H14 M9 10 H14" stroke="#111" stroke-width="1.5"/></svg>
<div class="t" style="left:27px;top:202.29999999999998px;transform:scaleX(0.815);transform-origin:0 0;font-size:6.3px;color:#000">Variables &amp; Formulas</div>
<div class="a" style="left:11.5px;top:212.4px;width:4.8px;height:0.8px;background:#b8b8b8"></div>
<svg class="a" style="left:16.5px;top:208.6px" width="8" height="8" viewBox="0 0 16 16"><rect x="1" y="1" width="14" height="14" fill="#ffff80"/><path d="M3 15 L8 2 L13 15 M5 10 H11" stroke="#111" stroke-width="2.4" fill="none"/></svg>
<div class="t" style="left:27px;top:210.29999999999998px;transform:scaleX(0.815);transform-origin:0 0;font-size:6.3px;color:#000">Text Labels</div>
<div class="a" style="left:11.5px;top:220.4px;width:4.8px;height:0.8px;background:#b8b8b8"></div>
<svg class="a" style="left:16.5px;top:216.6px" width="8" height="8" viewBox="0 0 16 16"><rect x="1" y="3" width="14" height="10" fill="#ffff80"/><path d="M3 6 H13 M3 10 H13" stroke="#111" stroke-width="2"/></svg>
<div class="t" style="left:27px;top:218.29999999999998px;transform:scaleX(0.815);transform-origin:0 0;font-size:6.3px;color:#000">Solve Sets</div>
<div class="a" style="left:11.5px;top:228.4px;width:4.8px;height:0.8px;background:#b8b8b8"></div>
<svg class="a" style="left:16.5px;top:224.6px" width="8" height="8" viewBox="0 0 16 16"><rect x="2" y="1" width="12" height="14" fill="#e8e080" stroke="#333" stroke-width="1.5"/><path d="M4 5 H12 M4 8 H12 M4 11 H12" stroke="#333" stroke-width="1.2"/></svg>
<div class="t" style="left:27px;top:226.29999999999998px;transform:scaleX(0.815);transform-origin:0 0;font-size:6.3px;color:#000">Entity Lists</div>
<svg class="a" style="left:9.6px;top:234.6px" width="3.4" height="4.2" viewBox="0 0 8 10"><path d="M1.2 1.2 L6.8 5 L1.2 8.8Z" fill="#fff" stroke="#6a6a6a" stroke-width="1.5"/></svg>
<div class="a" style="left:13.2px;top:236.4px;width:3px;height:0.8px;background:#c8c8c8"></div>
<svg class="a" style="left:16.5px;top:232.6px" width="8" height="8" viewBox="0 0 16 16"><rect x="1" y="1" width="14" height="14" fill="#ffff80"/><path d="M8 1 V15 M1 8 H15 M3 3 L13 13 M13 3 L3 13" stroke="#111" stroke-width="1.5"/></svg>
<div class="t" style="left:27px;top:234.29999999999998px;transform:scaleX(0.815);transform-origin:0 0;font-size:6.3px;color:#000">System</div>
<div class="a" style="left:11.5px;top:244.4px;width:4.8px;height:0.8px;background:#b8b8b8"></div>
<svg class="a" style="left:16.5px;top:240.6px" width="8" height="8" viewBox="0 0 16 16"><rect x="3" y="3" width="8" height="11" fill="#fff" stroke="#333" stroke-width="1.2"/><path d="M1 4 L8 8 L15 6 M8 8 L14 13" stroke="#20a020" stroke-width="1.4"/><circle cx="14" cy="6" r="1.6" fill="#e02020"/><circle cx="14" cy="13" r="1.6" fill="#e02020"/></svg>
<div class="t" style="left:27px;top:242.29999999999998px;transform:scaleX(0.815);transform-origin:0 0;font-size:6.3px;color:#000">No Dependents</div>
<div class="a" style="left:2px;top:255.3px;width:121px;height:0.8px;background:#fff"></div>
<div class="a" style="left:2px;top:257.6px;width:114.5px;height:6.3px;background:linear-gradient(90deg,#b4c8e2,#c4d5ea 60%,#c9d9ec)"></div>
<div class="t" style="left:2.7px;top:257.9px;transform:scaleX(0.8);transform-origin:0 0;font-size:6.5px;color:#3e4c60">Properties</div>
<svg class="a" style="left:118.9px;top:259.1px" width="3.6" height="3.6" viewBox="0 0 10 10"><path d="M1.5 1.5 L8.5 8.5 M8.5 1.5 L1.5 8.5" fill="none" stroke="#111" stroke-width="2.6"/></svg>
<div class="a" style="left:2.2px;top:265px;width:120.6px;height:1.0px;background:#5b5b5b"></div>
<div class="a" style="left:2.2px;top:265.4px;width:1px;height:147.5px;background:#6a6a6a"></div>
<div class="a" style="left:3.2px;top:265.8px;width:120px;height:147px;background:#fff"></div>
<div class="a" style="left:3.2px;top:265.8px;width:111px;height:7.8px;background:#f0f0f0"></div>
<div class="t" style="left:3.2px;top:267.4px;transform:scaleX(0.95);transform-origin:0 0;font-size:6.7px;font-weight:bold;color:#000">Multiple</div>
<div class="a" style="left:3.2px;top:273.1px;width:111px;height:0.8px;background:#dcdcdc"></div>
<div class="t" style="left:7px;top:275.3px;transform:scaleX(0.815);transform-origin:0 0;font-size:6.3px;color:#000">Color</div>
<div class="a" style="left:3.2px;top:281.25px;width:111px;height:0.7px;background:#dedede"></div>
<div class="a" style="left:59px;top:275.40000000000003px;width:6.2px;height:6px;background:#f04848;border:0.6px solid #602020"></div>
<div class="t" style="left:66.5px;top:275.3px;transform:scaleX(0.815);transform-origin:0 0;font-size:6.3px;color:#000;overflow:hidden;width:58.28220858895706px">12</div>
<div class="t" style="left:7px;top:283.45px;transform:scaleX(0.815);transform-origin:0 0;font-size:6.3px;color:#000">Visible</div>
<div class="a" style="left:3.2px;top:289.4px;width:111px;height:0.7px;background:#dedede"></div>
<div class="a" style="left:59px;top:283.35px;width:6px;height:6.2px;background:linear-gradient(#dadde2,#fafafa);border:0.5px solid #8a8f98"></div>
<svg class="a" style="left:59.9px;top:284.05px" width="4.6" height="4.6" viewBox="0 0 10 10"><path d="M1.5 5 L4 8.2 L8.8 1.2" fill="none" stroke="#1c3494" stroke-width="2.5"/></svg>
<div class="t" style="left:66.5px;top:283.45px;transform:scaleX(0.815);transform-origin:0 0;font-size:6.3px;color:#000;overflow:hidden;width:58.28220858895706px">True</div>
<div class="t" style="left:7px;top:291.6px;transform:scaleX(0.815);transform-origin:0 0;font-size:6.3px;color:#000">Layer</div>
<div class="a" style="left:3.2px;top:297.55px;width:111px;height:0.7px;background:#dedede"></div>
<svg class="a" style="left:58.5px;top:290.50000000000006px" width="7" height="7.5" viewBox="0 0 14 15"><rect x="0" y="0" width="10" height="15" fill="#ffff90"/><circle cx="6" cy="6" r="4.6" fill="#ffee00" stroke="#333" stroke-width="1.2"/><path d="M4 11 h4 v3 h-4z" fill="#222"/></svg>
<div class="t" style="left:66px;top:291.6px;transform:scaleX(0.815);transform-origin:0 0;font-size:6.3px;color:#000;overflow:hidden;width:58.895705521472394px">0</div>
<div class="t" style="left:7px;top:299.75px;transform:scaleX(0.815);transform-origin:0 0;font-size:6.3px;color:#000">Lock</div>
<div class="a" style="left:3.2px;top:305.7px;width:111px;height:0.7px;background:#dedede"></div>
<div class="a" style="left:59px;top:299.65000000000003px;width:6px;height:6.2px;background:linear-gradient(#d5d8dc,#f5f5f5);border:0.5px solid #9aa0a8"></div>
<div class="t" style="left:66.5px;top:299.75px;transform:scaleX(0.815);transform-origin:0 0;font-size:6.3px;color:#000;overflow:hidden;width:58.28220858895706px">False</div>
<div class="t" style="left:7px;top:307.90000000000003px;transform:scaleX(0.815);transform-origin:0 0;font-size:6.3px;color:#000">Relabel</div>
<div class="a" style="left:3.2px;top:313.85px;width:111px;height:0.7px;background:#dedede"></div>
<div class="t" style="left:59px;top:307.90000000000003px;transform:scaleX(0.815);transform-origin:0 0;font-size:6.3px;color:#000;overflow:hidden;width:67.48466257668711px">*</div>
<div class="t" style="left:7px;top:316.05px;transform:scaleX(0.815);transform-origin:0 0;font-size:6.3px;color:#000">Type  0 to 7</div>
<div class="a" style="left:3.2px;top:322.0px;width:111px;height:0.7px;background:#dedede"></div>
<div class="t" style="left:59px;top:316.05px;transform:scaleX(0.815);transform-origin:0 0;font-size:6.3px;color:#000;overflow:hidden;width:67.48466257668711px">3. On negative-normal (Ri</div>
<div class="a" style="left:4px;top:322.9px;width:52.8px;height:7.550000000000001px;background:#3290f0"></div>
<div class="t" style="left:7px;top:324.2px;transform:scaleX(0.815);transform-origin:0 0;font-size:6.3px;color:#fff">Radius</div>
<div class="a" style="left:3.2px;top:330.15px;width:111px;height:0.7px;background:#dedede"></div>
<div class="t" style="left:59px;top:324.2px;transform:scaleX(0.815);transform-origin:0 0;font-size:6.3px;color:#000;overflow:hidden;width:67.48466257668711px">.08</div>
<div class="t" style="left:7px;top:332.35px;transform:scaleX(0.815);transform-origin:0 0;font-size:6.3px;color:#000">Graph</div>
<div class="a" style="left:3.2px;top:338.3px;width:111px;height:0.7px;background:#dedede"></div>
<div class="t" style="left:59px;top:332.35px;transform:scaleX(0.815);transform-origin:0 0;font-size:6.3px;color:#000;overflow:hidden;width:67.48466257668711px">*</div>
<div class="t" style="left:7px;top:340.5px;transform:scaleX(0.815);transform-origin:0 0;font-size:6.3px;color:#000">u-Divisions</div>
<div class="a" style="left:3.2px;top:346.45px;width:111px;height:0.7px;background:#dedede"></div>
<div class="t" style="left:59px;top:340.5px;transform:scaleX(0.815);transform-origin:0 0;font-size:6.3px;color:#000;overflow:hidden;width:67.48466257668711px">8</div>
<div class="t" style="left:7px;top:348.65000000000003px;transform:scaleX(0.815);transform-origin:0 0;font-size:6.3px;color:#000">u-Subdivisions</div>
<div class="a" style="left:3.2px;top:354.6px;width:111px;height:0.7px;background:#dedede"></div>
<div class="t" style="left:59px;top:348.65000000000003px;transform:scaleX(0.815);transform-origin:0 0;font-size:6.3px;color:#000;overflow:hidden;width:67.48466257668711px">4</div>
<div class="t" style="left:7px;top:356.8px;transform:scaleX(0.815);transform-origin:0 0;font-size:6.3px;color:#000">v-Divisions</div>
<div class="a" style="left:3.2px;top:362.75px;width:111px;height:0.7px;background:#dedede"></div>
<div class="t" style="left:59px;top:356.8px;transform:scaleX(0.815);transform-origin:0 0;font-size:6.3px;color:#000;overflow:hidden;width:67.48466257668711px">8</div>
<div class="t" style="left:7px;top:364.95px;transform:scaleX(0.815);transform-origin:0 0;font-size:6.3px;color:#000">v-Subdivisions</div>
<div class="a" style="left:3.2px;top:370.9px;width:111px;height:0.7px;background:#dedede"></div>
<div class="t" style="left:59px;top:364.95px;transform:scaleX(0.815);transform-origin:0 0;font-size:6.3px;color:#000;overflow:hidden;width:67.48466257668711px">4</div>
<div class="t" style="left:7px;top:373.1px;transform:scaleX(0.815);transform-origin:0 0;font-size:6.3px;color:#000">Orientation</div>
<div class="a" style="left:3.2px;top:379.05px;width:111px;height:0.7px;background:#dedede"></div>
<div class="t" style="left:59px;top:373.1px;transform:scaleX(0.815);transform-origin:0 0;font-size:6.3px;color:#000;overflow:hidden;width:67.48466257668711px">Normal</div>
<div class="t" style="left:7px;top:381.25px;transform:scaleX(0.815);transform-origin:0 0;font-size:6.3px;color:#000">Show u-constant</div>
<div class="a" style="left:3.2px;top:387.2px;width:111px;height:0.7px;background:#dedede"></div>
<div class="a" style="left:59px;top:381.15000000000003px;width:6px;height:6.2px;background:linear-gradient(#d5d8dc,#f5f5f5);border:0.5px solid #9aa0a8"></div>
<div class="t" style="left:66.5px;top:381.25px;transform:scaleX(0.815);transform-origin:0 0;font-size:6.3px;color:#000;overflow:hidden;width:58.28220858895706px">False</div>
<div class="t" style="left:7px;top:389.40000000000003px;transform:scaleX(0.815);transform-origin:0 0;font-size:6.3px;color:#000">Show v-constant</div>
<div class="a" style="left:3.2px;top:395.35px;width:111px;height:0.7px;background:#dedede"></div>
<div class="a" style="left:59px;top:389.30000000000007px;width:6px;height:6.2px;background:linear-gradient(#d5d8dc,#f5f5f5);border:0.5px solid #9aa0a8"></div>
<div class="t" style="left:66.5px;top:389.40000000000003px;transform:scaleX(0.815);transform-origin:0 0;font-size:6.3px;color:#000;overflow:hidden;width:58.28220858895706px">False</div>
<div class="t" style="left:7px;top:397.55px;transform:scaleX(0.815);transform-origin:0 0;font-size:6.3px;color:#000">Weight/unit area</div>
<div class="a" style="left:3.2px;top:403.5px;width:111px;height:0.7px;background:#dedede"></div>
<div class="t" style="left:59px;top:397.55px;transform:scaleX(0.815);transform-origin:0 0;font-size:6.3px;color:#000;overflow:hidden;width:67.48466257668711px">0.0000</div>
<div class="t" style="left:7px;top:405.7px;transform:scaleX(0.815);transform-origin:0 0;font-size:6.3px;color:#000">Symmetry exempt</div>
<div class="a" style="left:3.2px;top:411.65px;width:111px;height:0.7px;background:#dedede"></div>
<div class="a" style="left:59px;top:405.6px;width:6px;height:6.2px;background:linear-gradient(#d5d8dc,#f5f5f5);border:0.5px solid #9aa0a8"></div>
<div class="t" style="left:66.5px;top:405.7px;transform:scaleX(0.815);transform-origin:0 0;font-size:6.3px;color:#000;overflow:hidden;width:58.28220858895706px">False</div>
<div class="a" style="left:56.6px;top:273.6px;width:0.7px;height:138.55px;background:#d8d8d8"></div>
<div class="a" style="left:114.6px;top:273.6px;width:8.8px;height:139.2px;background:#ebebeb;border-left:0.6px solid #e2e2e2"></div>
<svg class="a" style="left:117.2px;top:276.2px" width="3.2" height="3.2" viewBox="0 0 10 10"><path d="M1 7.5 L5 2.5 L9 7.5Z" fill="#333"/></svg>
<svg class="a" style="left:117.2px;top:407.4px" width="3.2" height="3.2" viewBox="0 0 10 10"><path d="M1 2.5 L5 7.5 L9 2.5Z" fill="#333"/></svg>
<div class="a" style="left:115.5px;top:282.8px;width:7.2px;height:113.5px;background:linear-gradient(90deg,#f5f5f5,#d8d8d8);border:0.6px solid #9a9a9a;border-radius:1.5px"></div>
<div class="a" style="left:117.7px;top:337.6px;width:3px;height:0.6px;background:#777"></div>
<div class="a" style="left:117.7px;top:339px;width:3px;height:0.6px;background:#777"></div>
<div class="a" style="left:117.7px;top:340.4px;width:3px;height:0.6px;background:#777"></div>
<svg class="a" style="left:115.6px;top:265.9px" width="7" height="7.4" viewBox="0 0 14 15"><rect x="0.5" y="0.5" width="13" height="14" fill="#f4f4f4" stroke="#888" stroke-width="1"/><circle cx="7" cy="6" r="3.5" fill="#f0e020" stroke="#333" stroke-width="1.2"/><rect x="5.5" y="9" width="3" height="3" fill="#333"/></svg>
<div class="a" style="left:2px;top:413px;width:121px;height:1px;background:#f8f8f8"></div>
<div class="a" style="left:2px;top:416.6px;width:114.5px;height:6.3px;background:linear-gradient(90deg,#b4c8e2,#c4d5ea 60%,#c9d9ec)"></div>
<div class="t" style="left:2.7px;top:416.9px;transform:scaleX(0.8);transform-origin:0 0;font-size:6.5px;color:#3e4c60">Selection Set</div>
<svg class="a" style="left:118.9px;top:418.1px" width="3.6" height="3.6" viewBox="0 0 10 10"><path d="M1.5 1.5 L8.5 8.5 M8.5 1.5 L1.5 8.5" fill="none" stroke="#111" stroke-width="2.6"/></svg>
<div class="a" style="left:2.2px;top:424px;width:120.6px;height:1.0px;background:#5b5b5b"></div>
<div class="a" style="left:2.2px;top:424.3px;width:1px;height:89px;background:#6a6a6a"></div>
<div class="a" style="left:5.7px;top:426.4px;width:9.7px;height:9.3px;border:0.8px solid #777;border-radius:1.5px;background:#d9d9d9"></div>
<svg class="a" style="left:6.9px;top:427.5px" width="7.299999999999999" height="7" viewBox="0 0 20 14" preserveAspectRatio="none"><rect x="3" y="1" width="14" height="12" fill="#fff" stroke="#222" stroke-width="1.6"/><path d="M8 1 V13 M12 1 V13 M3 5 H17 M3 9 H17" stroke="#222" stroke-width="1.2"/></svg>
<div class="a" style="left:18.3px;top:426.4px;width:9.0px;height:9.3px;border:0.6px solid #dedede;border-radius:1.5px;background:#f5f5f5"></div>
<svg class="a" style="left:19.5px;top:427.5px" width="6.6" height="7" viewBox="0 0 20 14" preserveAspectRatio="none"><path d="M10 13 V3 M5 7 L10 2 L15 7" stroke="#111" stroke-width="2" fill="none"/></svg>
<div class="a" style="left:30.3px;top:426.4px;width:8.999999999999996px;height:9.3px;border:0.6px solid #dedede;border-radius:1.5px;background:#f5f5f5"></div>
<svg class="a" style="left:31.5px;top:427.5px" width="6.599999999999996" height="7" viewBox="0 0 20 14" preserveAspectRatio="none"><path d="M10 1 V11 M5 7 L10 12 L15 7" stroke="#111" stroke-width="2" fill="none"/></svg>
<div class="a" style="left:42px;top:426.4px;width:9px;height:9.3px;border:0.6px solid #dedede;border-radius:1.5px;background:#f5f5f5"></div>
<svg class="a" style="left:43.2px;top:427.5px" width="6.6" height="7" viewBox="0 0 20 14" preserveAspectRatio="none"><path d="M4 2 L16 12 M16 2 L4 12" stroke="#e03030" stroke-width="1.6"/></svg>
<div class="a" style="left:54.3px;top:426.4px;width:9.200000000000003px;height:9.3px;border:0.6px solid #dedede;border-radius:1.5px;background:#f5f5f5"></div>
<svg class="a" style="left:55.5px;top:427.5px" width="6.8000000000000025" height="7" viewBox="0 0 20 14" preserveAspectRatio="none"><rect x="2" y="0" width="16" height="3" fill="#3050c0"/><path d="M4 3 L16 13 M16 3 L4 13" stroke="#e03030" stroke-width="2"/><rect x="2" y="2" width="16" height="11" fill="none" stroke="#777" stroke-width="1"/></svg>
<div class="t" style="left:66.5px;top:428.4px;transform:scaleX(0.815);transform-origin:0 0;font-size:6.3px;color:#000">3 Entities</div>
<div class="a" style="left:4.7px;top:437px;width:118px;height:76.5px;background:#fff;border-left:0.7px solid #a8a8a8;border-top:0.7px solid #a8a8a8;border-right:0.7px solid #9a9a9a"></div>
<div class="a" style="left:5.4px;top:437.7px;width:116.5px;height:11.6px;background:linear-gradient(#fafafa,#ececec)"></div>
<div class="t" style="left:7.5px;top:440.6px;transform:scaleX(0.815);transform-origin:0 0;font-size:6.3px;color:#000">Name</div>
<div class="t" style="left:81px;top:440.6px;transform:scaleX(0.815);transform-origin:0 0;font-size:6.3px;color:#000">Type</div>
<div class="t" style="left:116.8px;top:440.6px;transform:scaleX(0.815);transform-origin:0 0;font-size:6.3px;color:#000">Cl</div>
<div class="t" style="left:17px;top:451.0px;transform:scaleX(0.815);transform-origin:0 0;font-size:6.3px;color:#000">cab_top_md_0</div>
<div class="t" style="left:81px;top:451.0px;transform:scaleX(0.815);transform-origin:0 0;font-size:6.3px;color:#000">Rolling Ball...</div>
<div class="t" style="left:117px;top:451.0px;transform:scaleX(0.815);transform-origin:0 0;font-size:6.3px;color:#000">S</div>
<div class="t" style="left:17px;top:459.55px;transform:scaleX(0.815);transform-origin:0 0;font-size:6.3px;color:#000">cab_front_md_0</div>
<div class="t" style="left:81px;top:459.55px;transform:scaleX(0.815);transform-origin:0 0;font-size:6.3px;color:#000">Rolling Ball...</div>
<div class="t" style="left:117px;top:459.55px;transform:scaleX(0.815);transform-origin:0 0;font-size:6.3px;color:#000">S</div>
<div class="t" style="left:17px;top:468.1px;transform:scaleX(0.815);transform-origin:0 0;font-size:6.3px;color:#000">cab_side_md_0</div>
<div class="t" style="left:81px;top:468.1px;transform:scaleX(0.815);transform-origin:0 0;font-size:6.3px;color:#000">Rolling Ball...</div>
<div class="t" style="left:117px;top:468.1px;transform:scaleX(0.815);transform-origin:0 0;font-size:6.3px;color:#000">S</div>
<div class="a" style="left:5.4px;top:504px;width:116.5px;height:8.2px;background:#ececec"></div>
<svg class="a" style="left:8px;top:506.4px" width="3.2" height="3.2" viewBox="0 0 10 10"><path d="M7.5 1 L2.5 5 L7.5 9Z" fill="#333"/></svg>
<svg class="a" style="left:116.4px;top:506.4px" width="3.2" height="3.2" viewBox="0 0 10 10"><path d="M2.5 1 L7.5 5 L2.5 9Z" fill="#333"/></svg>
<div class="a" style="left:15px;top:504.6px;width:58.2px;height:7.3px;background:linear-gradient(#f5f5f5,#d5d5d5);border:0.6px solid #999;border-radius:1.5px"></div>
<div class="a" style="left:42.5px;top:506.5px;width:0.6px;height:3px;background:#777"></div>
<div class="a" style="left:43.9px;top:506.5px;width:0.6px;height:3px;background:#777"></div>
<div class="a" style="left:45.3px;top:506.5px;width:0.6px;height:3px;background:#777"></div>
<div class="a" style="left:0px;top:513.6px;width:700px;height:11.4px;background:#efedea"></div>
<div class="a" style="left:0px;top:513.6px;width:700px;height:1px;background:#d6d9cc"></div>
<div class="a" style="left:0px;top:514.6px;width:700px;height:1.2px;background:#fff"></div>
<div class="a" style="left:0px;top:523.6px;width:700px;height:1.4px;background:#8f969e"></div>
<div class="t" style="left:1.5px;top:516.2px;font-size:5.6px;color:#000">For Help, press F1.</div>
<div class="a" style="left:439.1px;top:515.2px;width:0.7px;height:8px;background:#c8c8c8"></div>
<div class="a" style="left:495.1px;top:515.2px;width:0.7px;height:8px;background:#c8c8c8"></div>
<div class="a" style="left:538.8px;top:515.2px;width:0.7px;height:8px;background:#c8c8c8"></div>
<div class="a" style="left:583.4px;top:515.2px;width:0.7px;height:8px;background:#c8c8c8"></div>
<div class="a" style="left:647.6px;top:515.2px;width:0.7px;height:8px;background:#c8c8c8"></div>
<div class="t" style="left:281.7px;top:517px;font-size:5.5px;color:#000">L0</div>
<div class="t" style="left:498px;top:517px;font-size:5.5px;color:#000">Lat 10.0</div>
<div class="t" style="left:541.7px;top:517px;font-size:5.5px;color:#000">Lon 13.5</div>
<div class="t" style="left:585.4px;top:517px;font-size:5.5px;color:#000">Radius 7.03</div>
<div class="t" style="left:650px;top:517px;font-size:5.5px;color:#000">Tilt 0.0</div>
<div class="a" style="left:126.3px;top:51.5px;width:572.5px;height:462.1px;background:#8080ff"></div>
<div class="a" style="left:697.6px;top:51.5px;width:1.2px;height:462.1px;background:#6a6af4"></div>
<div class="a" style="left:126.3px;top:512.6px;width:572.5px;height:1px;background:#5e5ef0"></div>
<div class="a" style="left:698.8px;top:51.5px;width:1.2px;height:462.1px;background:#e8e8ee"></div>
<svg class="a" style="left:0;top:0" width="700" height="525" viewBox="0 0 700 525"><defs><clipPath id="vp"><rect x="126.3" y="51.5" width="571.3" height="461.1"/></clipPath></defs><g clip-path="url(#vp)"><path d="M266,188.5 L372.7,186.8 L372.7,287 L266,289Z" fill="rgba(160,160,160,0.41)" stroke="#b4b4c0" stroke-width="0.6"/><path d="M280.6,219.1 C330,219 450,270 540,326 L705,418 L705,460 L440,368.7 C400,353 330,326 280.6,302.3 C250,286 232,273 224,263 C218,256 217,244 224,236 C232,226 255,221 280.6,219.1Z" fill="rgba(43,85,128,0.75)" stroke="#18aabb" stroke-width="0.7"/><path d="M287.7,213.7 C402.9,176.8 435.5,235.7 540,320 C500,325 430,338 373.5,351.6 C345,300 312,250 287.7,213.7Z" fill="rgba(0,80,0,0.45)" stroke="#10b020" stroke-width="0.8"/><path d="M299.7,210.1 L302.6,214.9 L305.5,219.7 L308.5,224.7 L311.6,229.8 L314.7,235.1 L317.9,240.4 L321.2,245.9 L324.5,251.4 L327.9,257.1 L331.3,262.8 L334.7,268.7 L338.1,274.6 L341.6,280.6 L345.1,286.7 L348.6,292.8 L352.1,299.0 L355.6,305.2 L359.1,311.5 L362.6,317.9 L366.0,324.3 L369.5,330.7 L372.9,337.2 L376.3,343.6 L379.6,350.1 M316.2,206.2 L318.8,211.0 L321.4,216.0 L324.2,221.1 L326.9,226.4 L329.8,231.7 L332.7,237.2 L335.6,242.7 L338.6,248.4 L341.7,254.1 L344.8,260.0 L347.9,265.9 L351.0,271.9 L354.2,277.9 L357.3,284.1 L360.5,290.2 L363.7,296.5 L366.9,302.8 L370.0,309.2 L373.2,315.6 L376.3,322.0 L379.5,328.5 L382.6,335.0 L385.6,341.5 L388.7,348.0 M334.1,203.4 L336.4,208.3 L338.8,213.4 L341.2,218.6 L343.7,223.9 L346.3,229.3 L348.9,234.8 L351.6,240.4 L354.3,246.1 L357.0,251.8 L359.8,257.7 L362.6,263.6 L365.4,269.6 L368.3,275.7 L371.1,281.8 L374.0,288.0 L376.9,294.2 L379.8,300.5 L382.6,306.9 L385.5,313.2 L388.3,319.7 L391.2,326.1 L393.9,332.6 L396.7,339.1 L399.4,345.6 M352.4,202.5 L354.4,207.4 L356.6,212.5 L358.8,217.7 L361.1,223.0 L363.4,228.3 L365.8,233.8 L368.2,239.3 L370.6,245.0 L373.1,250.7 L375.6,256.4 L378.2,262.3 L380.7,268.2 L383.3,274.2 L385.9,280.2 L388.5,286.3 L391.1,292.5 L393.7,298.7 L396.3,304.9 L398.9,311.2 L401.5,317.5 L404.1,323.8 L406.6,330.2 L409.1,336.5 L411.6,342.9 M370.6,204.0 L372.5,208.9 L374.4,213.8 L376.5,218.9 L378.5,224.0 L380.7,229.3 L382.8,234.6 L385.0,240.0 L387.3,245.4 L389.6,251.0 L391.9,256.6 L394.2,262.3 L396.5,268.0 L398.9,273.8 L401.3,279.6 L403.7,285.5 L406.1,291.5 L408.4,297.4 L410.8,303.5 L413.2,309.5 L415.5,315.6 L417.9,321.7 L420.2,327.8 L422.5,334.0 L424.8,340.1 M388.6,208.2 L390.3,212.9 L392.2,217.6 L394.1,222.5 L396.0,227.4 L398.0,232.3 L400.0,237.4 L402.0,242.5 L404.1,247.7 L406.2,253.0 L408.4,258.3 L410.5,263.7 L412.7,269.1 L414.9,274.6 L417.1,280.1 L419.3,285.7 L421.5,291.3 L423.7,297.0 L425.9,302.6 L428.1,308.4 L430.3,314.1 L432.5,319.9 L434.6,325.7 L436.7,331.5 L438.8,337.3 M406.5,215.4 L408.2,219.7 L409.9,224.1 L411.7,228.6 L413.5,233.1 L415.4,237.8 L417.3,242.4 L419.2,247.2 L421.1,252.0 L423.1,256.8 L425.1,261.7 L427.1,266.7 L429.1,271.7 L431.2,276.8 L433.2,281.8 L435.3,287.0 L437.3,292.1 L439.4,297.3 L441.4,302.6 L443.5,307.8 L445.5,313.1 L447.6,318.4 L449.6,323.7 L451.5,329.0 L453.5,334.4 M424.7,225.5 L426.3,229.4 L427.9,233.4 L429.6,237.4 L431.3,241.5 L433.0,245.6 L434.8,249.8 L436.6,254.0 L438.4,258.3 L440.3,262.6 L442.1,267.0 L444.0,271.4 L445.9,275.8 L447.8,280.3 L449.7,284.9 L451.6,289.4 L453.5,294.0 L455.4,298.6 L457.3,303.3 L459.2,307.9 L461.1,312.6 L463.0,317.3 L464.9,322.0 L466.7,326.8 L468.6,331.5 M443.5,238.8 L445.0,242.1 L446.6,245.5 L448.1,248.9 L449.7,252.3 L451.3,255.9 L452.9,259.4 L454.6,263.0 L456.2,266.7 L457.9,270.3 L459.6,274.0 L461.3,277.8 L463.1,281.6 L464.8,285.4 L466.5,289.2 L468.3,293.1 L470.0,297.0 L471.8,300.9 L473.5,304.8 L475.3,308.8 L477.0,312.8 L478.7,316.7 L480.4,320.7 L482.1,324.7 L483.8,328.8 M463.7,255.0 L465.0,257.6 L466.4,260.3 L467.7,263.0 L469.1,265.8 L470.5,268.5 L472.0,271.4 L473.4,274.2 L474.9,277.1 L476.3,280.0 L477.8,283.0 L479.3,285.9 L480.8,288.9 L482.3,291.9 L483.8,295.0 L485.4,298.0 L486.9,301.1 L488.4,304.2 L489.9,307.3 L491.4,310.4 L492.9,313.5 L494.4,316.7 L495.9,319.8 L497.4,323.0 L498.9,326.2 M485.9,274.1 L486.9,275.9 L488.0,277.8 L489.1,279.7 L490.2,281.6 L491.3,283.6 L492.4,285.5 L493.6,287.5 L494.7,289.6 L495.9,291.6 L497.0,293.6 L498.2,295.7 L499.4,297.8 L500.5,299.9 L501.7,302.0 L502.9,304.2 L504.1,306.3 L505.3,308.5 L506.5,310.6 L507.6,312.8 L508.8,315.0 L510.0,317.2 L511.2,319.4 L512.3,321.6 L513.5,323.8 M511.0,295.8 L511.6,296.8 L512.2,297.8 L512.9,298.8 L513.6,299.8 L514.2,300.8 L514.9,301.8 L515.6,302.9 L516.2,303.9 L516.9,305.0 L517.6,306.0 L518.3,307.1 L519.0,308.2 L519.7,309.3 L520.4,310.4 L521.1,311.5 L521.8,312.6 L522.5,313.7 L523.2,314.9 L523.9,316.0 L524.6,317.1 L525.2,318.3 L525.9,319.4 L526.6,320.6 L527.3,321.7 M289.9,217.0 L300.2,214.0 L310.0,211.4 L319.4,209.4 L328.4,207.8 L337.1,206.8 L345.5,206.2 L353.6,206.0 L361.4,206.3 L368.9,207.1 L376.3,208.2 L383.4,209.8 L390.4,211.7 L397.3,214.1 L404.0,216.8 L410.6,219.9 L417.2,223.3 L423.7,227.0 L430.2,231.1 L436.8,235.5 L443.4,240.2 L450.0,245.2 L456.7,250.5 L463.6,256.0 L470.6,261.8 M292.9,221.5 L302.9,218.6 L312.5,216.2 L321.7,214.2 L330.6,212.7 L339.1,211.6 L347.4,211.0 L355.3,210.9 L363.0,211.1 L370.5,211.8 L377.7,212.9 L384.8,214.3 L391.7,216.1 L398.5,218.3 L405.1,220.9 L411.7,223.8 L418.2,227.0 L424.7,230.5 L431.1,234.4 L437.6,238.5 L444.1,243.0 L450.7,247.7 L457.3,252.7 L464.0,257.9 L470.9,263.4 M296.8,227.3 L306.5,224.6 L315.8,222.2 L324.8,220.3 L333.4,218.9 L341.7,217.9 L349.8,217.3 L357.6,217.1 L365.1,217.3 L372.5,217.8 L379.6,218.8 L386.6,220.1 L393.4,221.7 L400.1,223.8 L406.7,226.1 L413.2,228.8 L419.6,231.7 L426.0,235.0 L432.3,238.6 L438.7,242.4 L445.1,246.6 L451.5,250.9 L458.0,255.6 L464.6,260.5 L471.3,265.6 M301.6,234.6 L310.9,231.9 L319.9,229.7 L328.6,227.9 L336.9,226.6 L345.0,225.5 L352.8,224.9 L360.4,224.7 L367.8,224.8 L375.0,225.2 L382.0,226.1 L388.8,227.2 L395.5,228.7 L402.1,230.5 L408.6,232.6 L415.0,234.9 L421.3,237.6 L427.6,240.6 L433.8,243.8 L440.1,247.3 L446.4,251.1 L452.7,255.0 L459.0,259.3 L465.4,263.7 L472.0,268.4 M308.2,244.6 L317.0,242.2 L325.5,240.1 L333.8,238.4 L341.8,237.1 L349.6,236.1 L357.1,235.5 L364.4,235.1 L371.6,235.1 L378.5,235.5 L385.3,236.1 L392.0,237.0 L398.5,238.2 L405.0,239.7 L411.3,241.5 L417.5,243.5 L423.7,245.8 L429.9,248.3 L436.0,251.1 L442.1,254.1 L448.2,257.4 L454.3,260.8 L460.5,264.5 L466.7,268.4 L472.9,272.5 M316.7,257.7 L324.9,255.5 L332.9,253.6 L340.7,252.0 L348.2,250.8 L355.5,249.8 L362.7,249.1 L369.7,248.7 L376.5,248.5 L383.2,248.7 L389.8,249.1 L396.2,249.7 L402.5,250.6 L408.7,251.7 L414.8,253.1 L420.9,254.7 L426.9,256.5 L432.9,258.5 L438.8,260.7 L444.7,263.2 L450.6,265.8 L456.5,268.6 L462.4,271.6 L468.4,274.8 L474.4,278.1 M329.0,276.9 L336.4,275.0 L343.6,273.4 L350.6,271.9 L357.5,270.7 L364.3,269.7 L370.9,269.0 L377.4,268.4 L383.8,268.1 L390.1,267.9 L396.3,268.0 L402.4,268.2 L408.4,268.7 L414.3,269.3 L420.1,270.1 L425.9,271.1 L431.7,272.2 L437.4,273.6 L443.1,275.0 L448.7,276.7 L454.3,278.5 L459.9,280.4 L465.5,282.5 L471.1,284.7 L476.7,287.1 M342.5,298.5 L349.0,296.9 L355.4,295.4 L361.7,294.1 L367.9,293.0 L374.0,292.0 L380.1,291.1 L386.0,290.4 L391.9,289.8 L397.8,289.4 L403.6,289.1 L409.3,289.0 L414.9,289.0 L420.5,289.1 L426.1,289.3 L431.6,289.6 L437.1,290.1 L442.5,290.7 L447.9,291.4 L453.2,292.3 L458.5,293.2 L463.8,294.2 L469.1,295.4 L474.3,296.6 L479.6,298.0" fill="none" stroke="#10b81a" stroke-width="0.75" opacity="0.8"/><path d="M294,205.8 L518,260.5 L482,328 C470,324 462,322 456,320 L400,301 C385,296 375,291 366,287 C345,277 330,270 314,261 C300,253 286,245 277,238 Z" fill="rgba(59,59,29,0.35)" stroke="#c9c9c9" stroke-width="0.7"/><path d="M447,297.1 L520.9,296.3 L540.6,332.3 L460,333.5Z" fill="rgba(150,150,150,0.3)" stroke="#b8b8b8" stroke-width="0.7"/><path d="M288.6,212.6 C320,228 390,262 455,301 L489,323.7 L470,318 L452,315 C400,280 340,247 292,220.5 C290,218 288.3,215 288.6,212.6 Z" fill="#783030" stroke="#ff5454" stroke-width="1.1"/><path d="M293.5,219.3 C340,245 400,279 451,313.5" fill="none" stroke="#2a0a0a" stroke-width="0.7" opacity="0.6"/><path d="M454,315.3 L529.4,309.3 L529.4,312 L454,319Z" fill="#6a2424" stroke="#ff5050" stroke-width="0.75"/><path d="M455.7,302.3 L466.9,296.3 L481.4,332.3 C476,333 472,335 469.4,339.1 Z" fill="rgba(190,60,60,0.78)" stroke="#ff5a5a" stroke-width="0.8"/><path d="M311.8,258.8 L316.2,263.2 M316.2,258.8 L311.8,263.2" stroke="#111" stroke-width="0.9"/><path d="M345,297 L524,511" stroke="#2a2a55" stroke-width="1.1" stroke-dasharray="1.1 4.1"/></g></svg>
</body></html>
